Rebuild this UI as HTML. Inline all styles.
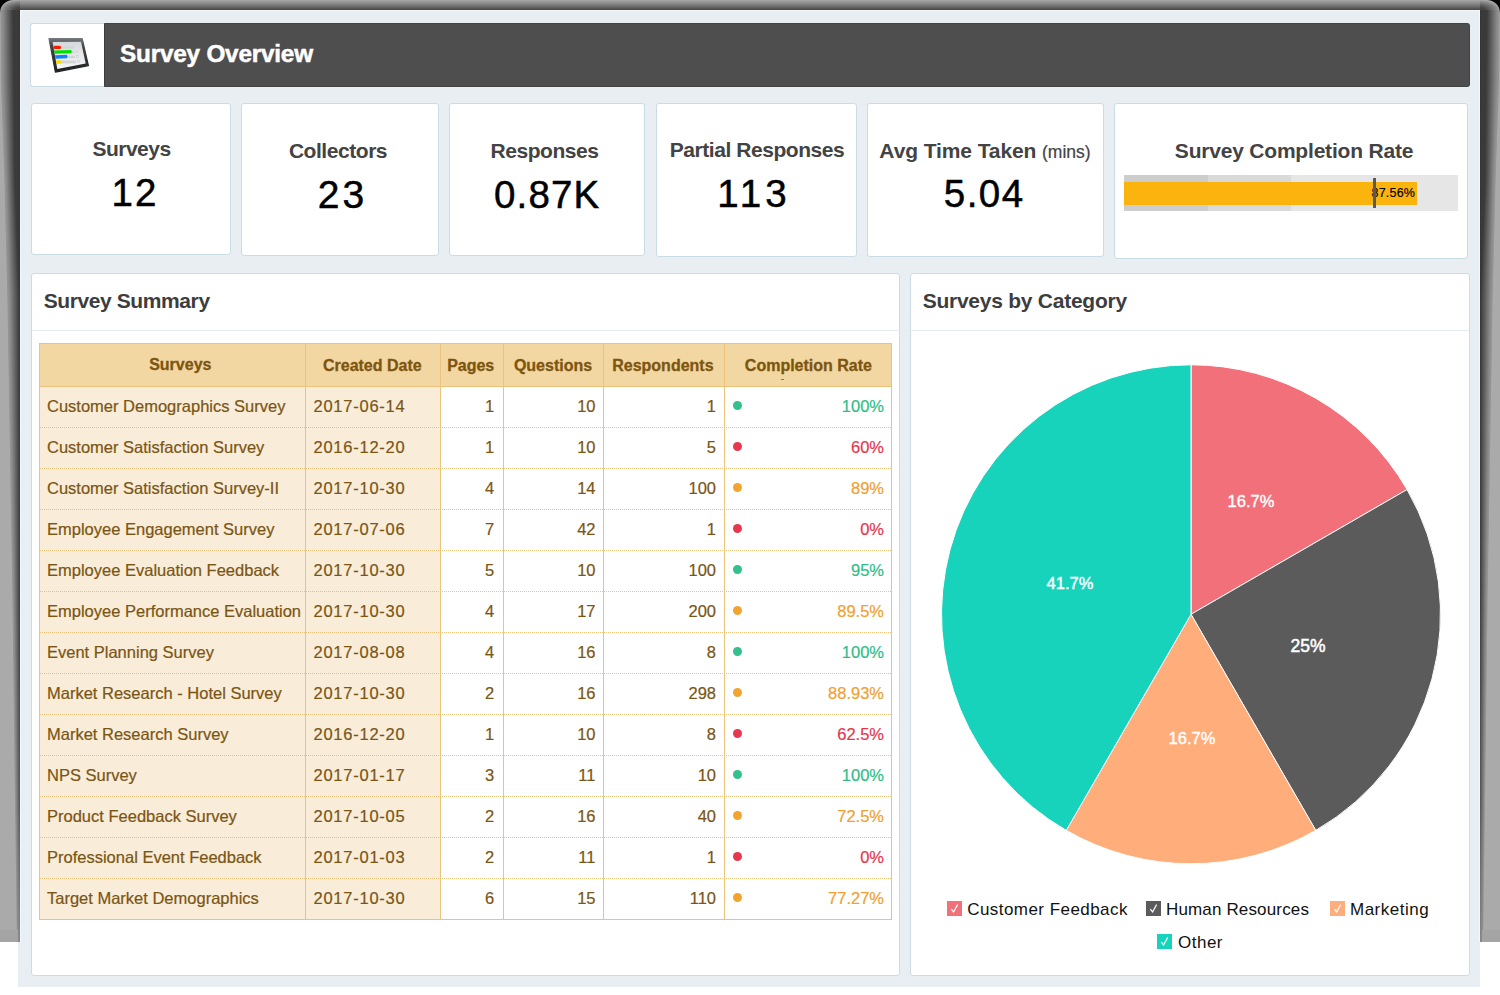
<!DOCTYPE html>
<html><head><meta charset="utf-8"><title>Survey Overview</title>
<style>
html,body{margin:0;padding:0;}
body{width:1500px;height:995px;position:relative;overflow:hidden;background:#fff;font-family:"Liberation Sans", sans-serif;}
.t{position:absolute;white-space:nowrap;}
</style></head><body>
<div style="position:absolute;left:18px;top:10px;width:1462px;height:977px;box-sizing:border-box;background:#e9eef2;"></div><div style="position:absolute;left:20px;top:10px;width:1460px;height:1px;box-sizing:border-box;background:#f4f8fb;"></div><div style="position:absolute;left:20px;top:10px;width:1px;height:932px;box-sizing:border-box;background:#f4f8fb;"></div><div style="position:absolute;left:1479px;top:10px;width:1px;height:932px;box-sizing:border-box;background:#f4f8fb;"></div><div style="position:absolute;left:0px;top:0px;width:1500px;height:10px;box-sizing:border-box;background:linear-gradient(to bottom,#ababab 0px,#959595 2px,#8f8f8f 3px,#5c5c5c 8px,#474747 10px);"></div><div style="position:absolute;left:0px;top:10px;width:20px;height:4px;box-sizing:border-box;background:linear-gradient(to right,#aaaaaa 0px,#aaaaaa 0.01px,#959595 0.81px,#8c8c8c 2.77px,#3a3a3a 13.03px,#3a3a3a 19.2px,#2e2e2e 20px);"></div><div style="position:absolute;left:1480px;top:10px;width:20px;height:4px;box-sizing:border-box;background:linear-gradient(to left,#aaaaaa 0px,#aaaaaa 0.01px,#959595 0.81px,#8c8c8c 2.77px,#3a3a3a 13.03px,#3a3a3a 19.2px,#2e2e2e 20px);"></div><div style="position:absolute;left:0px;top:14px;width:20px;height:4px;box-sizing:border-box;background:linear-gradient(to right,#aaaaaa 0px,#aaaaaa 0.04px,#959595 0.84px,#8c8c8c 2.80px,#3a3a3a 13.09px,#3a3a3a 19.2px,#2e2e2e 20px);"></div><div style="position:absolute;left:1480px;top:14px;width:20px;height:4px;box-sizing:border-box;background:linear-gradient(to left,#aaaaaa 0px,#aaaaaa 0.04px,#959595 0.84px,#8c8c8c 2.80px,#3a3a3a 13.09px,#3a3a3a 19.2px,#2e2e2e 20px);"></div><div style="position:absolute;left:0px;top:18px;width:20px;height:4px;box-sizing:border-box;background:linear-gradient(to right,#aaaaaa 0px,#aaaaaa 0.07px,#959595 0.87px,#8c8c8c 2.83px,#3a3a3a 13.14px,#3a3a3a 19.2px,#2e2e2e 20px);"></div><div style="position:absolute;left:1480px;top:18px;width:20px;height:4px;box-sizing:border-box;background:linear-gradient(to left,#aaaaaa 0px,#aaaaaa 0.07px,#959595 0.87px,#8c8c8c 2.83px,#3a3a3a 13.14px,#3a3a3a 19.2px,#2e2e2e 20px);"></div><div style="position:absolute;left:0px;top:22px;width:20px;height:4px;box-sizing:border-box;background:linear-gradient(to right,#aaaaaa 0px,#aaaaaa 0.10px,#959595 0.90px,#8c8c8c 2.87px,#3a3a3a 13.20px,#3a3a3a 19.2px,#2e2e2e 20px);"></div><div style="position:absolute;left:1480px;top:22px;width:20px;height:4px;box-sizing:border-box;background:linear-gradient(to left,#aaaaaa 0px,#aaaaaa 0.10px,#959595 0.90px,#8c8c8c 2.87px,#3a3a3a 13.20px,#3a3a3a 19.2px,#2e2e2e 20px);"></div><div style="position:absolute;left:0px;top:26px;width:20px;height:4px;box-sizing:border-box;background:linear-gradient(to right,#aaaaaa 0px,#aaaaaa 0.13px,#959595 0.93px,#8c8c8c 2.90px,#3a3a3a 13.26px,#3a3a3a 19.2px,#2e2e2e 20px);"></div><div style="position:absolute;left:1480px;top:26px;width:20px;height:4px;box-sizing:border-box;background:linear-gradient(to left,#aaaaaa 0px,#aaaaaa 0.13px,#959595 0.93px,#8c8c8c 2.90px,#3a3a3a 13.26px,#3a3a3a 19.2px,#2e2e2e 20px);"></div><div style="position:absolute;left:0px;top:30px;width:20px;height:4px;box-sizing:border-box;background:linear-gradient(to right,#aaaaaa 0px,#aaaaaa 0.16px,#959595 0.96px,#8c8c8c 2.93px,#3a3a3a 13.31px,#3a3a3a 19.2px,#2e2e2e 20px);"></div><div style="position:absolute;left:1480px;top:30px;width:20px;height:4px;box-sizing:border-box;background:linear-gradient(to left,#aaaaaa 0px,#aaaaaa 0.16px,#959595 0.96px,#8c8c8c 2.93px,#3a3a3a 13.31px,#3a3a3a 19.2px,#2e2e2e 20px);"></div><div style="position:absolute;left:0px;top:34px;width:20px;height:4px;box-sizing:border-box;background:linear-gradient(to right,#aaaaaa 0px,#aaaaaa 0.19px,#959595 0.99px,#8c8c8c 2.96px,#3a3a3a 13.37px,#3a3a3a 19.2px,#2e2e2e 20px);"></div><div style="position:absolute;left:1480px;top:34px;width:20px;height:4px;box-sizing:border-box;background:linear-gradient(to left,#aaaaaa 0px,#aaaaaa 0.19px,#959595 0.99px,#8c8c8c 2.96px,#3a3a3a 13.37px,#3a3a3a 19.2px,#2e2e2e 20px);"></div><div style="position:absolute;left:0px;top:38px;width:20px;height:4px;box-sizing:border-box;background:linear-gradient(to right,#aaaaaa 0px,#aaaaaa 0.21px,#959595 1.01px,#8c8c8c 3.00px,#3a3a3a 13.43px,#3a3a3a 19.2px,#2e2e2e 20px);"></div><div style="position:absolute;left:1480px;top:38px;width:20px;height:4px;box-sizing:border-box;background:linear-gradient(to left,#aaaaaa 0px,#aaaaaa 0.21px,#959595 1.01px,#8c8c8c 3.00px,#3a3a3a 13.43px,#3a3a3a 19.2px,#2e2e2e 20px);"></div><div style="position:absolute;left:0px;top:42px;width:20px;height:4px;box-sizing:border-box;background:linear-gradient(to right,#aaaaaa 0px,#aaaaaa 0.24px,#959595 1.04px,#8c8c8c 3.03px,#3a3a3a 13.49px,#3a3a3a 19.2px,#2e2e2e 20px);"></div><div style="position:absolute;left:1480px;top:42px;width:20px;height:4px;box-sizing:border-box;background:linear-gradient(to left,#aaaaaa 0px,#aaaaaa 0.24px,#959595 1.04px,#8c8c8c 3.03px,#3a3a3a 13.49px,#3a3a3a 19.2px,#2e2e2e 20px);"></div><div style="position:absolute;left:0px;top:46px;width:20px;height:4px;box-sizing:border-box;background:linear-gradient(to right,#aaaaaa 0px,#aaaaaa 0.27px,#959595 1.07px,#8c8c8c 3.06px,#3a3a3a 13.54px,#3a3a3a 19.2px,#2e2e2e 20px);"></div><div style="position:absolute;left:1480px;top:46px;width:20px;height:4px;box-sizing:border-box;background:linear-gradient(to left,#aaaaaa 0px,#aaaaaa 0.27px,#959595 1.07px,#8c8c8c 3.06px,#3a3a3a 13.54px,#3a3a3a 19.2px,#2e2e2e 20px);"></div><div style="position:absolute;left:0px;top:50px;width:20px;height:4px;box-sizing:border-box;background:linear-gradient(to right,#aaaaaa 0px,#aaaaaa 0.30px,#959595 1.10px,#8c8c8c 3.09px,#3a3a3a 13.60px,#3a3a3a 19.2px,#2e2e2e 20px);"></div><div style="position:absolute;left:1480px;top:50px;width:20px;height:4px;box-sizing:border-box;background:linear-gradient(to left,#aaaaaa 0px,#aaaaaa 0.30px,#959595 1.10px,#8c8c8c 3.09px,#3a3a3a 13.60px,#3a3a3a 19.2px,#2e2e2e 20px);"></div><div style="position:absolute;left:0px;top:54px;width:20px;height:4px;box-sizing:border-box;background:linear-gradient(to right,#aaaaaa 0px,#aaaaaa 0.33px,#959595 1.13px,#8c8c8c 3.13px,#3a3a3a 13.66px,#3a3a3a 19.2px,#2e2e2e 20px);"></div><div style="position:absolute;left:1480px;top:54px;width:20px;height:4px;box-sizing:border-box;background:linear-gradient(to left,#aaaaaa 0px,#aaaaaa 0.33px,#959595 1.13px,#8c8c8c 3.13px,#3a3a3a 13.66px,#3a3a3a 19.2px,#2e2e2e 20px);"></div><div style="position:absolute;left:0px;top:58px;width:20px;height:4px;box-sizing:border-box;background:linear-gradient(to right,#aaaaaa 0px,#aaaaaa 0.36px,#959595 1.16px,#8c8c8c 3.16px,#3a3a3a 13.71px,#3a3a3a 19.2px,#2e2e2e 20px);"></div><div style="position:absolute;left:1480px;top:58px;width:20px;height:4px;box-sizing:border-box;background:linear-gradient(to left,#aaaaaa 0px,#aaaaaa 0.36px,#959595 1.16px,#8c8c8c 3.16px,#3a3a3a 13.71px,#3a3a3a 19.2px,#2e2e2e 20px);"></div><div style="position:absolute;left:0px;top:62px;width:20px;height:4px;box-sizing:border-box;background:linear-gradient(to right,#aaaaaa 0px,#aaaaaa 0.39px,#959595 1.19px,#8c8c8c 3.19px,#3a3a3a 13.77px,#3a3a3a 19.2px,#2e2e2e 20px);"></div><div style="position:absolute;left:1480px;top:62px;width:20px;height:4px;box-sizing:border-box;background:linear-gradient(to left,#aaaaaa 0px,#aaaaaa 0.39px,#959595 1.19px,#8c8c8c 3.19px,#3a3a3a 13.77px,#3a3a3a 19.2px,#2e2e2e 20px);"></div><div style="position:absolute;left:0px;top:66px;width:20px;height:4px;box-sizing:border-box;background:linear-gradient(to right,#aaaaaa 0px,#aaaaaa 0.41px,#959595 1.21px,#8c8c8c 3.23px,#3a3a3a 13.83px,#3a3a3a 19.2px,#2e2e2e 20px);"></div><div style="position:absolute;left:1480px;top:66px;width:20px;height:4px;box-sizing:border-box;background:linear-gradient(to left,#aaaaaa 0px,#aaaaaa 0.41px,#959595 1.21px,#8c8c8c 3.23px,#3a3a3a 13.83px,#3a3a3a 19.2px,#2e2e2e 20px);"></div><div style="position:absolute;left:0px;top:70px;width:20px;height:4px;box-sizing:border-box;background:linear-gradient(to right,#aaaaaa 0px,#aaaaaa 0.44px,#959595 1.24px,#8c8c8c 3.26px,#3a3a3a 13.89px,#3a3a3a 19.2px,#2e2e2e 20px);"></div><div style="position:absolute;left:1480px;top:70px;width:20px;height:4px;box-sizing:border-box;background:linear-gradient(to left,#aaaaaa 0px,#aaaaaa 0.44px,#959595 1.24px,#8c8c8c 3.26px,#3a3a3a 13.89px,#3a3a3a 19.2px,#2e2e2e 20px);"></div><div style="position:absolute;left:0px;top:74px;width:20px;height:4px;box-sizing:border-box;background:linear-gradient(to right,#aaaaaa 0px,#aaaaaa 0.47px,#959595 1.27px,#8c8c8c 3.29px,#3a3a3a 13.94px,#3a3a3a 19.2px,#2e2e2e 20px);"></div><div style="position:absolute;left:1480px;top:74px;width:20px;height:4px;box-sizing:border-box;background:linear-gradient(to left,#aaaaaa 0px,#aaaaaa 0.47px,#959595 1.27px,#8c8c8c 3.29px,#3a3a3a 13.94px,#3a3a3a 19.2px,#2e2e2e 20px);"></div><div style="position:absolute;left:0px;top:78px;width:20px;height:4px;box-sizing:border-box;background:linear-gradient(to right,#aaaaaa 0px,#aaaaaa 0.50px,#959595 1.30px,#8c8c8c 3.33px,#3a3a3a 14.00px,#3a3a3a 19.2px,#2e2e2e 20px);"></div><div style="position:absolute;left:1480px;top:78px;width:20px;height:4px;box-sizing:border-box;background:linear-gradient(to left,#aaaaaa 0px,#aaaaaa 0.50px,#959595 1.30px,#8c8c8c 3.33px,#3a3a3a 14.00px,#3a3a3a 19.2px,#2e2e2e 20px);"></div><div style="position:absolute;left:0px;top:82px;width:20px;height:4px;box-sizing:border-box;background:linear-gradient(to right,#aaaaaa 0px,#aaaaaa 0.64px,#959595 1.44px,#8c8c8c 3.45px,#3a3a3a 14.04px,#3a3a3a 19.2px,#2e2e2e 20px);"></div><div style="position:absolute;left:1480px;top:82px;width:20px;height:4px;box-sizing:border-box;background:linear-gradient(to left,#aaaaaa 0px,#aaaaaa 0.64px,#959595 1.44px,#8c8c8c 3.45px,#3a3a3a 14.04px,#3a3a3a 19.2px,#2e2e2e 20px);"></div><div style="position:absolute;left:0px;top:86px;width:20px;height:4px;box-sizing:border-box;background:linear-gradient(to right,#aaaaaa 0px,#aaaaaa 0.78px,#959595 1.58px,#8c8c8c 3.58px,#3a3a3a 14.08px,#3a3a3a 19.2px,#2e2e2e 20px);"></div><div style="position:absolute;left:1480px;top:86px;width:20px;height:4px;box-sizing:border-box;background:linear-gradient(to left,#aaaaaa 0px,#aaaaaa 0.78px,#959595 1.58px,#8c8c8c 3.58px,#3a3a3a 14.08px,#3a3a3a 19.2px,#2e2e2e 20px);"></div><div style="position:absolute;left:0px;top:90px;width:20px;height:4px;box-sizing:border-box;background:linear-gradient(to right,#aaaaaa 0px,#aaaaaa 0.92px,#959595 1.72px,#8c8c8c 3.70px,#3a3a3a 14.12px,#3a3a3a 19.2px,#2e2e2e 20px);"></div><div style="position:absolute;left:1480px;top:90px;width:20px;height:4px;box-sizing:border-box;background:linear-gradient(to left,#aaaaaa 0px,#aaaaaa 0.92px,#959595 1.72px,#8c8c8c 3.70px,#3a3a3a 14.12px,#3a3a3a 19.2px,#2e2e2e 20px);"></div><div style="position:absolute;left:0px;top:94px;width:20px;height:4px;box-sizing:border-box;background:linear-gradient(to right,#aaaaaa 0px,#aaaaaa 1.06px,#959595 1.86px,#8c8c8c 3.83px,#3a3a3a 14.16px,#3a3a3a 19.2px,#2e2e2e 20px);"></div><div style="position:absolute;left:1480px;top:94px;width:20px;height:4px;box-sizing:border-box;background:linear-gradient(to left,#aaaaaa 0px,#aaaaaa 1.06px,#959595 1.86px,#8c8c8c 3.83px,#3a3a3a 14.16px,#3a3a3a 19.2px,#2e2e2e 20px);"></div><div style="position:absolute;left:0px;top:98px;width:20px;height:4px;box-sizing:border-box;background:linear-gradient(to right,#aaaaaa 0px,#aaaaaa 1.20px,#959595 2.00px,#8c8c8c 3.95px,#3a3a3a 14.20px,#3a3a3a 19.2px,#2e2e2e 20px);"></div><div style="position:absolute;left:1480px;top:98px;width:20px;height:4px;box-sizing:border-box;background:linear-gradient(to left,#aaaaaa 0px,#aaaaaa 1.20px,#959595 2.00px,#8c8c8c 3.95px,#3a3a3a 14.20px,#3a3a3a 19.2px,#2e2e2e 20px);"></div><div style="position:absolute;left:0px;top:102px;width:20px;height:4px;box-sizing:border-box;background:linear-gradient(to right,#aaaaaa 0px,#aaaaaa 1.34px,#959595 2.14px,#8c8c8c 4.08px,#3a3a3a 14.24px,#3a3a3a 19.2px,#2e2e2e 20px);"></div><div style="position:absolute;left:1480px;top:102px;width:20px;height:4px;box-sizing:border-box;background:linear-gradient(to left,#aaaaaa 0px,#aaaaaa 1.34px,#959595 2.14px,#8c8c8c 4.08px,#3a3a3a 14.24px,#3a3a3a 19.2px,#2e2e2e 20px);"></div><div style="position:absolute;left:0px;top:106px;width:20px;height:4px;box-sizing:border-box;background:linear-gradient(to right,#aaaaaa 0px,#aaaaaa 1.48px,#959595 2.28px,#8c8c8c 4.20px,#3a3a3a 14.28px,#3a3a3a 19.2px,#2e2e2e 20px);"></div><div style="position:absolute;left:1480px;top:106px;width:20px;height:4px;box-sizing:border-box;background:linear-gradient(to left,#aaaaaa 0px,#aaaaaa 1.48px,#959595 2.28px,#8c8c8c 4.20px,#3a3a3a 14.28px,#3a3a3a 19.2px,#2e2e2e 20px);"></div><div style="position:absolute;left:0px;top:110px;width:20px;height:4px;box-sizing:border-box;background:linear-gradient(to right,#aaaaaa 0px,#aaaaaa 1.62px,#959595 2.42px,#8c8c8c 4.33px,#3a3a3a 14.32px,#3a3a3a 19.2px,#2e2e2e 20px);"></div><div style="position:absolute;left:1480px;top:110px;width:20px;height:4px;box-sizing:border-box;background:linear-gradient(to left,#aaaaaa 0px,#aaaaaa 1.62px,#959595 2.42px,#8c8c8c 4.33px,#3a3a3a 14.32px,#3a3a3a 19.2px,#2e2e2e 20px);"></div><div style="position:absolute;left:0px;top:114px;width:20px;height:4px;box-sizing:border-box;background:linear-gradient(to right,#aaaaaa 0px,#aaaaaa 1.76px,#959595 2.56px,#8c8c8c 4.45px,#3a3a3a 14.36px,#3a3a3a 19.2px,#2e2e2e 20px);"></div><div style="position:absolute;left:1480px;top:114px;width:20px;height:4px;box-sizing:border-box;background:linear-gradient(to left,#aaaaaa 0px,#aaaaaa 1.76px,#959595 2.56px,#8c8c8c 4.45px,#3a3a3a 14.36px,#3a3a3a 19.2px,#2e2e2e 20px);"></div><div style="position:absolute;left:0px;top:118px;width:20px;height:4px;box-sizing:border-box;background:linear-gradient(to right,#aaaaaa 0px,#aaaaaa 1.90px,#959595 2.70px,#8c8c8c 4.58px,#3a3a3a 14.40px,#3a3a3a 19.2px,#2e2e2e 20px);"></div><div style="position:absolute;left:1480px;top:118px;width:20px;height:4px;box-sizing:border-box;background:linear-gradient(to left,#aaaaaa 0px,#aaaaaa 1.90px,#959595 2.70px,#8c8c8c 4.58px,#3a3a3a 14.40px,#3a3a3a 19.2px,#2e2e2e 20px);"></div><div style="position:absolute;left:0px;top:122px;width:20px;height:4px;box-sizing:border-box;background:linear-gradient(to right,#aaaaaa 0px,#aaaaaa 2.04px,#959595 2.84px,#8c8c8c 4.70px,#3a3a3a 14.44px,#3a3a3a 19.2px,#2e2e2e 20px);"></div><div style="position:absolute;left:1480px;top:122px;width:20px;height:4px;box-sizing:border-box;background:linear-gradient(to left,#aaaaaa 0px,#aaaaaa 2.04px,#959595 2.84px,#8c8c8c 4.70px,#3a3a3a 14.44px,#3a3a3a 19.2px,#2e2e2e 20px);"></div><div style="position:absolute;left:0px;top:126px;width:20px;height:4px;box-sizing:border-box;background:linear-gradient(to right,#aaaaaa 0px,#aaaaaa 2.18px,#959595 2.98px,#8c8c8c 4.82px,#3a3a3a 14.48px,#3a3a3a 19.2px,#2e2e2e 20px);"></div><div style="position:absolute;left:1480px;top:126px;width:20px;height:4px;box-sizing:border-box;background:linear-gradient(to left,#aaaaaa 0px,#aaaaaa 2.18px,#959595 2.98px,#8c8c8c 4.82px,#3a3a3a 14.48px,#3a3a3a 19.2px,#2e2e2e 20px);"></div><div style="position:absolute;left:0px;top:130px;width:20px;height:4px;box-sizing:border-box;background:linear-gradient(to right,#aaaaaa 0px,#aaaaaa 2.32px,#959595 3.12px,#8c8c8c 4.95px,#3a3a3a 14.52px,#3a3a3a 19.2px,#2e2e2e 20px);"></div><div style="position:absolute;left:1480px;top:130px;width:20px;height:4px;box-sizing:border-box;background:linear-gradient(to left,#aaaaaa 0px,#aaaaaa 2.32px,#959595 3.12px,#8c8c8c 4.95px,#3a3a3a 14.52px,#3a3a3a 19.2px,#2e2e2e 20px);"></div><div style="position:absolute;left:0px;top:134px;width:20px;height:4px;box-sizing:border-box;background:linear-gradient(to right,#aaaaaa 0px,#aaaaaa 2.46px,#959595 3.26px,#8c8c8c 5.08px,#3a3a3a 14.56px,#3a3a3a 19.2px,#2e2e2e 20px);"></div><div style="position:absolute;left:1480px;top:134px;width:20px;height:4px;box-sizing:border-box;background:linear-gradient(to left,#aaaaaa 0px,#aaaaaa 2.46px,#959595 3.26px,#8c8c8c 5.08px,#3a3a3a 14.56px,#3a3a3a 19.2px,#2e2e2e 20px);"></div><div style="position:absolute;left:0px;top:138px;width:20px;height:4px;box-sizing:border-box;background:linear-gradient(to right,#aaaaaa 0px,#aaaaaa 2.60px,#959595 3.40px,#8c8c8c 5.20px,#3a3a3a 14.60px,#3a3a3a 19.2px,#2e2e2e 20px);"></div><div style="position:absolute;left:1480px;top:138px;width:20px;height:4px;box-sizing:border-box;background:linear-gradient(to left,#aaaaaa 0px,#aaaaaa 2.60px,#959595 3.40px,#8c8c8c 5.20px,#3a3a3a 14.60px,#3a3a3a 19.2px,#2e2e2e 20px);"></div><div style="position:absolute;left:0px;top:142px;width:20px;height:4px;box-sizing:border-box;background:linear-gradient(to right,#aaaaaa 0px,#aaaaaa 2.74px,#959595 3.54px,#8c8c8c 5.33px,#3a3a3a 14.64px,#3a3a3a 19.2px,#2e2e2e 20px);"></div><div style="position:absolute;left:1480px;top:142px;width:20px;height:4px;box-sizing:border-box;background:linear-gradient(to left,#aaaaaa 0px,#aaaaaa 2.74px,#959595 3.54px,#8c8c8c 5.33px,#3a3a3a 14.64px,#3a3a3a 19.2px,#2e2e2e 20px);"></div><div style="position:absolute;left:0px;top:146px;width:20px;height:4px;box-sizing:border-box;background:linear-gradient(to right,#aaaaaa 0px,#aaaaaa 2.88px,#959595 3.68px,#8c8c8c 5.45px,#3a3a3a 14.68px,#3a3a3a 19.2px,#2e2e2e 20px);"></div><div style="position:absolute;left:1480px;top:146px;width:20px;height:4px;box-sizing:border-box;background:linear-gradient(to left,#aaaaaa 0px,#aaaaaa 2.88px,#959595 3.68px,#8c8c8c 5.45px,#3a3a3a 14.68px,#3a3a3a 19.2px,#2e2e2e 20px);"></div><div style="position:absolute;left:0px;top:150px;width:20px;height:4px;box-sizing:border-box;background:linear-gradient(to right,#aaaaaa 0px,#aaaaaa 3.02px,#959595 3.82px,#8c8c8c 5.58px,#3a3a3a 14.72px,#3a3a3a 19.2px,#2e2e2e 20px);"></div><div style="position:absolute;left:1480px;top:150px;width:20px;height:4px;box-sizing:border-box;background:linear-gradient(to left,#aaaaaa 0px,#aaaaaa 3.02px,#959595 3.82px,#8c8c8c 5.58px,#3a3a3a 14.72px,#3a3a3a 19.2px,#2e2e2e 20px);"></div><div style="position:absolute;left:0px;top:154px;width:20px;height:4px;box-sizing:border-box;background:linear-gradient(to right,#aaaaaa 0px,#aaaaaa 3.16px,#959595 3.96px,#8c8c8c 5.70px,#3a3a3a 14.76px,#3a3a3a 19.2px,#2e2e2e 20px);"></div><div style="position:absolute;left:1480px;top:154px;width:20px;height:4px;box-sizing:border-box;background:linear-gradient(to left,#aaaaaa 0px,#aaaaaa 3.16px,#959595 3.96px,#8c8c8c 5.70px,#3a3a3a 14.76px,#3a3a3a 19.2px,#2e2e2e 20px);"></div><div style="position:absolute;left:0px;top:158px;width:20px;height:4px;box-sizing:border-box;background:linear-gradient(to right,#aaaaaa 0px,#aaaaaa 3.30px,#959595 4.10px,#8c8c8c 5.82px,#3a3a3a 14.80px,#3a3a3a 19.2px,#2e2e2e 20px);"></div><div style="position:absolute;left:1480px;top:158px;width:20px;height:4px;box-sizing:border-box;background:linear-gradient(to left,#aaaaaa 0px,#aaaaaa 3.30px,#959595 4.10px,#8c8c8c 5.82px,#3a3a3a 14.80px,#3a3a3a 19.2px,#2e2e2e 20px);"></div><div style="position:absolute;left:0px;top:162px;width:20px;height:4px;box-sizing:border-box;background:linear-gradient(to right,#aaaaaa 0px,#aaaaaa 3.44px,#959595 4.24px,#8c8c8c 5.95px,#3a3a3a 14.84px,#3a3a3a 19.2px,#2e2e2e 20px);"></div><div style="position:absolute;left:1480px;top:162px;width:20px;height:4px;box-sizing:border-box;background:linear-gradient(to left,#aaaaaa 0px,#aaaaaa 3.44px,#959595 4.24px,#8c8c8c 5.95px,#3a3a3a 14.84px,#3a3a3a 19.2px,#2e2e2e 20px);"></div><div style="position:absolute;left:0px;top:166px;width:20px;height:4px;box-sizing:border-box;background:linear-gradient(to right,#aaaaaa 0px,#aaaaaa 3.58px,#959595 4.38px,#8c8c8c 6.08px,#3a3a3a 14.88px,#3a3a3a 19.2px,#2e2e2e 20px);"></div><div style="position:absolute;left:1480px;top:166px;width:20px;height:4px;box-sizing:border-box;background:linear-gradient(to left,#aaaaaa 0px,#aaaaaa 3.58px,#959595 4.38px,#8c8c8c 6.08px,#3a3a3a 14.88px,#3a3a3a 19.2px,#2e2e2e 20px);"></div><div style="position:absolute;left:0px;top:170px;width:20px;height:4px;box-sizing:border-box;background:linear-gradient(to right,#aaaaaa 0px,#aaaaaa 3.72px,#959595 4.52px,#8c8c8c 6.20px,#3a3a3a 14.92px,#3a3a3a 19.2px,#2e2e2e 20px);"></div><div style="position:absolute;left:1480px;top:170px;width:20px;height:4px;box-sizing:border-box;background:linear-gradient(to left,#aaaaaa 0px,#aaaaaa 3.72px,#959595 4.52px,#8c8c8c 6.20px,#3a3a3a 14.92px,#3a3a3a 19.2px,#2e2e2e 20px);"></div><div style="position:absolute;left:0px;top:174px;width:20px;height:4px;box-sizing:border-box;background:linear-gradient(to right,#aaaaaa 0px,#aaaaaa 3.86px,#959595 4.66px,#8c8c8c 6.33px,#3a3a3a 14.96px,#3a3a3a 19.2px,#2e2e2e 20px);"></div><div style="position:absolute;left:1480px;top:174px;width:20px;height:4px;box-sizing:border-box;background:linear-gradient(to left,#aaaaaa 0px,#aaaaaa 3.86px,#959595 4.66px,#8c8c8c 6.33px,#3a3a3a 14.96px,#3a3a3a 19.2px,#2e2e2e 20px);"></div><div style="position:absolute;left:0px;top:178px;width:20px;height:4px;box-sizing:border-box;background:linear-gradient(to right,#aaaaaa 0px,#aaaaaa 4.00px,#959595 4.80px,#8c8c8c 6.45px,#3a3a3a 15.00px,#3a3a3a 19.2px,#2e2e2e 20px);"></div><div style="position:absolute;left:1480px;top:178px;width:20px;height:4px;box-sizing:border-box;background:linear-gradient(to left,#aaaaaa 0px,#aaaaaa 4.00px,#959595 4.80px,#8c8c8c 6.45px,#3a3a3a 15.00px,#3a3a3a 19.2px,#2e2e2e 20px);"></div><div style="position:absolute;left:0px;top:182px;width:20px;height:4px;box-sizing:border-box;background:linear-gradient(to right,#aaaaaa 0px,#aaaaaa 4.10px,#959595 4.90px,#8c8c8c 6.56px,#3a3a3a 15.15px,#3a3a3a 19.2px,#2e2e2e 20px);"></div><div style="position:absolute;left:1480px;top:182px;width:20px;height:4px;box-sizing:border-box;background:linear-gradient(to left,#aaaaaa 0px,#aaaaaa 4.10px,#959595 4.90px,#8c8c8c 6.56px,#3a3a3a 15.15px,#3a3a3a 19.2px,#2e2e2e 20px);"></div><div style="position:absolute;left:0px;top:186px;width:20px;height:4px;box-sizing:border-box;background:linear-gradient(to right,#aaaaaa 0px,#aaaaaa 4.20px,#959595 5.00px,#8c8c8c 6.66px,#3a3a3a 15.29px,#3a3a3a 19.2px,#2e2e2e 20px);"></div><div style="position:absolute;left:1480px;top:186px;width:20px;height:4px;box-sizing:border-box;background:linear-gradient(to left,#aaaaaa 0px,#aaaaaa 4.20px,#959595 5.00px,#8c8c8c 6.66px,#3a3a3a 15.29px,#3a3a3a 19.2px,#2e2e2e 20px);"></div><div style="position:absolute;left:0px;top:190px;width:20px;height:4px;box-sizing:border-box;background:linear-gradient(to right,#aaaaaa 0px,#aaaaaa 4.30px,#959595 5.10px,#8c8c8c 6.77px,#3a3a3a 15.44px,#3a3a3a 19.2px,#2e2e2e 20px);"></div><div style="position:absolute;left:1480px;top:190px;width:20px;height:4px;box-sizing:border-box;background:linear-gradient(to left,#aaaaaa 0px,#aaaaaa 4.30px,#959595 5.10px,#8c8c8c 6.77px,#3a3a3a 15.44px,#3a3a3a 19.2px,#2e2e2e 20px);"></div><div style="position:absolute;left:0px;top:194px;width:20px;height:4px;box-sizing:border-box;background:linear-gradient(to right,#aaaaaa 0px,#aaaaaa 4.40px,#959595 5.20px,#8c8c8c 6.88px,#3a3a3a 15.59px,#3a3a3a 19.2px,#2e2e2e 20px);"></div><div style="position:absolute;left:1480px;top:194px;width:20px;height:4px;box-sizing:border-box;background:linear-gradient(to left,#aaaaaa 0px,#aaaaaa 4.40px,#959595 5.20px,#8c8c8c 6.88px,#3a3a3a 15.59px,#3a3a3a 19.2px,#2e2e2e 20px);"></div><div style="position:absolute;left:0px;top:198px;width:20px;height:4px;box-sizing:border-box;background:linear-gradient(to right,#aaaaaa 0px,#aaaaaa 4.50px,#959595 5.30px,#8c8c8c 6.98px,#3a3a3a 15.73px,#3a3a3a 19.2px,#2e2e2e 20px);"></div><div style="position:absolute;left:1480px;top:198px;width:20px;height:4px;box-sizing:border-box;background:linear-gradient(to left,#aaaaaa 0px,#aaaaaa 4.50px,#959595 5.30px,#8c8c8c 6.98px,#3a3a3a 15.73px,#3a3a3a 19.2px,#2e2e2e 20px);"></div><div style="position:absolute;left:0px;top:202px;width:20px;height:4px;box-sizing:border-box;background:linear-gradient(to right,#aaaaaa 0px,#aaaaaa 4.60px,#959595 5.40px,#8c8c8c 7.09px,#3a3a3a 15.88px,#3a3a3a 19.2px,#2e2e2e 20px);"></div><div style="position:absolute;left:1480px;top:202px;width:20px;height:4px;box-sizing:border-box;background:linear-gradient(to left,#aaaaaa 0px,#aaaaaa 4.60px,#959595 5.40px,#8c8c8c 7.09px,#3a3a3a 15.88px,#3a3a3a 19.2px,#2e2e2e 20px);"></div><div style="position:absolute;left:0px;top:206px;width:20px;height:4px;box-sizing:border-box;background:linear-gradient(to right,#aaaaaa 0px,#aaaaaa 4.70px,#959595 5.50px,#8c8c8c 7.20px,#3a3a3a 16.03px,#3a3a3a 19.2px,#2e2e2e 20px);"></div><div style="position:absolute;left:1480px;top:206px;width:20px;height:4px;box-sizing:border-box;background:linear-gradient(to left,#aaaaaa 0px,#aaaaaa 4.70px,#959595 5.50px,#8c8c8c 7.20px,#3a3a3a 16.03px,#3a3a3a 19.2px,#2e2e2e 20px);"></div><div style="position:absolute;left:0px;top:210px;width:20px;height:4px;box-sizing:border-box;background:linear-gradient(to right,#aaaaaa 0px,#aaaaaa 4.80px,#959595 5.60px,#8c8c8c 7.31px,#3a3a3a 16.17px,#3a3a3a 19.2px,#2e2e2e 20px);"></div><div style="position:absolute;left:1480px;top:210px;width:20px;height:4px;box-sizing:border-box;background:linear-gradient(to left,#aaaaaa 0px,#aaaaaa 4.80px,#959595 5.60px,#8c8c8c 7.31px,#3a3a3a 16.17px,#3a3a3a 19.2px,#2e2e2e 20px);"></div><div style="position:absolute;left:0px;top:214px;width:20px;height:4px;box-sizing:border-box;background:linear-gradient(to right,#aaaaaa 0px,#aaaaaa 4.90px,#959595 5.70px,#8c8c8c 7.41px,#3a3a3a 16.32px,#3a3a3a 19.2px,#2e2e2e 20px);"></div><div style="position:absolute;left:1480px;top:214px;width:20px;height:4px;box-sizing:border-box;background:linear-gradient(to left,#aaaaaa 0px,#aaaaaa 4.90px,#959595 5.70px,#8c8c8c 7.41px,#3a3a3a 16.32px,#3a3a3a 19.2px,#2e2e2e 20px);"></div><div style="position:absolute;left:0px;top:218px;width:20px;height:4px;box-sizing:border-box;background:linear-gradient(to right,#aaaaaa 0px,#aaaaaa 5.00px,#959595 5.80px,#8c8c8c 7.52px,#3a3a3a 16.47px,#3a3a3a 19.2px,#2e2e2e 20px);"></div><div style="position:absolute;left:1480px;top:218px;width:20px;height:4px;box-sizing:border-box;background:linear-gradient(to left,#aaaaaa 0px,#aaaaaa 5.00px,#959595 5.80px,#8c8c8c 7.52px,#3a3a3a 16.47px,#3a3a3a 19.2px,#2e2e2e 20px);"></div><div style="position:absolute;left:0px;top:222px;width:20px;height:4px;box-sizing:border-box;background:linear-gradient(to right,#aaaaaa 0px,#aaaaaa 5.10px,#959595 5.90px,#8c8c8c 7.63px,#3a3a3a 16.61px,#3a3a3a 19.2px,#2e2e2e 20px);"></div><div style="position:absolute;left:1480px;top:222px;width:20px;height:4px;box-sizing:border-box;background:linear-gradient(to left,#aaaaaa 0px,#aaaaaa 5.10px,#959595 5.90px,#8c8c8c 7.63px,#3a3a3a 16.61px,#3a3a3a 19.2px,#2e2e2e 20px);"></div><div style="position:absolute;left:0px;top:226px;width:20px;height:4px;box-sizing:border-box;background:linear-gradient(to right,#aaaaaa 0px,#aaaaaa 5.20px,#959595 6.00px,#8c8c8c 7.73px,#3a3a3a 16.76px,#3a3a3a 19.2px,#2e2e2e 20px);"></div><div style="position:absolute;left:1480px;top:226px;width:20px;height:4px;box-sizing:border-box;background:linear-gradient(to left,#aaaaaa 0px,#aaaaaa 5.20px,#959595 6.00px,#8c8c8c 7.73px,#3a3a3a 16.76px,#3a3a3a 19.2px,#2e2e2e 20px);"></div><div style="position:absolute;left:0px;top:230px;width:20px;height:4px;box-sizing:border-box;background:linear-gradient(to right,#aaaaaa 0px,#aaaaaa 5.30px,#959595 6.10px,#8c8c8c 7.84px,#3a3a3a 16.91px,#3a3a3a 19.2px,#2e2e2e 20px);"></div><div style="position:absolute;left:1480px;top:230px;width:20px;height:4px;box-sizing:border-box;background:linear-gradient(to left,#aaaaaa 0px,#aaaaaa 5.30px,#959595 6.10px,#8c8c8c 7.84px,#3a3a3a 16.91px,#3a3a3a 19.2px,#2e2e2e 20px);"></div><div style="position:absolute;left:0px;top:234px;width:20px;height:4px;box-sizing:border-box;background:linear-gradient(to right,#aaaaaa 0px,#aaaaaa 5.40px,#959595 6.20px,#8c8c8c 7.95px,#3a3a3a 17.05px,#3a3a3a 19.2px,#2e2e2e 20px);"></div><div style="position:absolute;left:1480px;top:234px;width:20px;height:4px;box-sizing:border-box;background:linear-gradient(to left,#aaaaaa 0px,#aaaaaa 5.40px,#959595 6.20px,#8c8c8c 7.95px,#3a3a3a 17.05px,#3a3a3a 19.2px,#2e2e2e 20px);"></div><div style="position:absolute;left:0px;top:238px;width:20px;height:4px;box-sizing:border-box;background:linear-gradient(to right,#aaaaaa 0px,#aaaaaa 5.50px,#959595 6.30px,#8c8c8c 8.05px,#3a3a3a 17.20px,#3a3a3a 19.2px,#2e2e2e 20px);"></div><div style="position:absolute;left:1480px;top:238px;width:20px;height:4px;box-sizing:border-box;background:linear-gradient(to left,#aaaaaa 0px,#aaaaaa 5.50px,#959595 6.30px,#8c8c8c 8.05px,#3a3a3a 17.20px,#3a3a3a 19.2px,#2e2e2e 20px);"></div><div style="position:absolute;left:0px;top:242px;width:20px;height:4px;box-sizing:border-box;background:linear-gradient(to right,#aaaaaa 0px,#aaaaaa 5.60px,#959595 6.40px,#8c8c8c 8.16px,#3a3a3a 17.35px,#3a3a3a 19.2px,#2e2e2e 20px);"></div><div style="position:absolute;left:1480px;top:242px;width:20px;height:4px;box-sizing:border-box;background:linear-gradient(to left,#aaaaaa 0px,#aaaaaa 5.60px,#959595 6.40px,#8c8c8c 8.16px,#3a3a3a 17.35px,#3a3a3a 19.2px,#2e2e2e 20px);"></div><div style="position:absolute;left:0px;top:246px;width:20px;height:4px;box-sizing:border-box;background:linear-gradient(to right,#aaaaaa 0px,#aaaaaa 5.70px,#959595 6.50px,#8c8c8c 8.27px,#3a3a3a 17.49px,#3a3a3a 19.2px,#2e2e2e 20px);"></div><div style="position:absolute;left:1480px;top:246px;width:20px;height:4px;box-sizing:border-box;background:linear-gradient(to left,#aaaaaa 0px,#aaaaaa 5.70px,#959595 6.50px,#8c8c8c 8.27px,#3a3a3a 17.49px,#3a3a3a 19.2px,#2e2e2e 20px);"></div><div style="position:absolute;left:0px;top:250px;width:20px;height:4px;box-sizing:border-box;background:linear-gradient(to right,#aaaaaa 0px,#aaaaaa 5.80px,#959595 6.60px,#8c8c8c 8.38px,#3a3a3a 17.64px,#3a3a3a 19.2px,#2e2e2e 20px);"></div><div style="position:absolute;left:1480px;top:250px;width:20px;height:4px;box-sizing:border-box;background:linear-gradient(to left,#aaaaaa 0px,#aaaaaa 5.80px,#959595 6.60px,#8c8c8c 8.38px,#3a3a3a 17.64px,#3a3a3a 19.2px,#2e2e2e 20px);"></div><div style="position:absolute;left:0px;top:254px;width:20px;height:4px;box-sizing:border-box;background:linear-gradient(to right,#aaaaaa 0px,#aaaaaa 5.90px,#959595 6.70px,#8c8c8c 8.48px,#3a3a3a 17.79px,#3a3a3a 19.2px,#2e2e2e 20px);"></div><div style="position:absolute;left:1480px;top:254px;width:20px;height:4px;box-sizing:border-box;background:linear-gradient(to left,#aaaaaa 0px,#aaaaaa 5.90px,#959595 6.70px,#8c8c8c 8.48px,#3a3a3a 17.79px,#3a3a3a 19.2px,#2e2e2e 20px);"></div><div style="position:absolute;left:0px;top:258px;width:20px;height:4px;box-sizing:border-box;background:linear-gradient(to right,#aaaaaa 0px,#aaaaaa 6.00px,#959595 6.80px,#8c8c8c 8.59px,#3a3a3a 17.93px,#3a3a3a 19.2px,#2e2e2e 20px);"></div><div style="position:absolute;left:1480px;top:258px;width:20px;height:4px;box-sizing:border-box;background:linear-gradient(to left,#aaaaaa 0px,#aaaaaa 6.00px,#959595 6.80px,#8c8c8c 8.59px,#3a3a3a 17.93px,#3a3a3a 19.2px,#2e2e2e 20px);"></div><div style="position:absolute;left:0px;top:262px;width:20px;height:4px;box-sizing:border-box;background:linear-gradient(to right,#aaaaaa 0px,#aaaaaa 6.10px,#959595 6.90px,#8c8c8c 8.70px,#3a3a3a 18.08px,#3a3a3a 19.2px,#2e2e2e 20px);"></div><div style="position:absolute;left:1480px;top:262px;width:20px;height:4px;box-sizing:border-box;background:linear-gradient(to left,#aaaaaa 0px,#aaaaaa 6.10px,#959595 6.90px,#8c8c8c 8.70px,#3a3a3a 18.08px,#3a3a3a 19.2px,#2e2e2e 20px);"></div><div style="position:absolute;left:0px;top:266px;width:20px;height:4px;box-sizing:border-box;background:linear-gradient(to right,#aaaaaa 0px,#aaaaaa 6.20px,#959595 7.00px,#8c8c8c 8.80px,#3a3a3a 18.23px,#3a3a3a 19.2px,#2e2e2e 20px);"></div><div style="position:absolute;left:1480px;top:266px;width:20px;height:4px;box-sizing:border-box;background:linear-gradient(to left,#aaaaaa 0px,#aaaaaa 6.20px,#959595 7.00px,#8c8c8c 8.80px,#3a3a3a 18.23px,#3a3a3a 19.2px,#2e2e2e 20px);"></div><div style="position:absolute;left:0px;top:270px;width:20px;height:4px;box-sizing:border-box;background:linear-gradient(to right,#aaaaaa 0px,#aaaaaa 6.30px,#959595 7.10px,#8c8c8c 8.91px,#3a3a3a 18.37px,#3a3a3a 19.2px,#2e2e2e 20px);"></div><div style="position:absolute;left:1480px;top:270px;width:20px;height:4px;box-sizing:border-box;background:linear-gradient(to left,#aaaaaa 0px,#aaaaaa 6.30px,#959595 7.10px,#8c8c8c 8.91px,#3a3a3a 18.37px,#3a3a3a 19.2px,#2e2e2e 20px);"></div><div style="position:absolute;left:0px;top:274px;width:20px;height:4px;box-sizing:border-box;background:linear-gradient(to right,#aaaaaa 0px,#aaaaaa 6.40px,#959595 7.20px,#8c8c8c 9.02px,#3a3a3a 18.52px,#3a3a3a 19.2px,#2e2e2e 20px);"></div><div style="position:absolute;left:1480px;top:274px;width:20px;height:4px;box-sizing:border-box;background:linear-gradient(to left,#aaaaaa 0px,#aaaaaa 6.40px,#959595 7.20px,#8c8c8c 9.02px,#3a3a3a 18.52px,#3a3a3a 19.2px,#2e2e2e 20px);"></div><div style="position:absolute;left:0px;top:278px;width:20px;height:4px;box-sizing:border-box;background:linear-gradient(to right,#aaaaaa 0px,#aaaaaa 6.50px,#959595 7.30px,#8c8c8c 9.12px,#3a3a3a 18.67px,#3a3a3a 19.2px,#2e2e2e 20px);"></div><div style="position:absolute;left:1480px;top:278px;width:20px;height:4px;box-sizing:border-box;background:linear-gradient(to left,#aaaaaa 0px,#aaaaaa 6.50px,#959595 7.30px,#8c8c8c 9.12px,#3a3a3a 18.67px,#3a3a3a 19.2px,#2e2e2e 20px);"></div><div style="position:absolute;left:0px;top:282px;width:20px;height:4px;box-sizing:border-box;background:linear-gradient(to right,#aaaaaa 0px,#aaaaaa 6.60px,#959595 7.40px,#8c8c8c 9.23px,#3a3a3a 18.81px,#3a3a3a 19.2px,#2e2e2e 20px);"></div><div style="position:absolute;left:1480px;top:282px;width:20px;height:4px;box-sizing:border-box;background:linear-gradient(to left,#aaaaaa 0px,#aaaaaa 6.60px,#959595 7.40px,#8c8c8c 9.23px,#3a3a3a 18.81px,#3a3a3a 19.2px,#2e2e2e 20px);"></div><div style="position:absolute;left:0px;top:286px;width:20px;height:4px;box-sizing:border-box;background:linear-gradient(to right,#aaaaaa 0px,#aaaaaa 6.70px,#959595 7.50px,#8c8c8c 9.34px,#3a3a3a 18.96px,#3a3a3a 19.2px,#2e2e2e 20px);"></div><div style="position:absolute;left:1480px;top:286px;width:20px;height:4px;box-sizing:border-box;background:linear-gradient(to left,#aaaaaa 0px,#aaaaaa 6.70px,#959595 7.50px,#8c8c8c 9.34px,#3a3a3a 18.96px,#3a3a3a 19.2px,#2e2e2e 20px);"></div><div style="position:absolute;left:0px;top:290px;width:20px;height:4px;box-sizing:border-box;background:linear-gradient(to right,#aaaaaa 0px,#aaaaaa 6.80px,#959595 7.60px,#8c8c8c 9.45px,#3a3a3a 19.11px,#3a3a3a 19.2px,#2e2e2e 20px);"></div><div style="position:absolute;left:1480px;top:290px;width:20px;height:4px;box-sizing:border-box;background:linear-gradient(to left,#aaaaaa 0px,#aaaaaa 6.80px,#959595 7.60px,#8c8c8c 9.45px,#3a3a3a 19.11px,#3a3a3a 19.2px,#2e2e2e 20px);"></div><div style="position:absolute;left:0px;top:294px;width:20px;height:4px;box-sizing:border-box;background:linear-gradient(to right,#aaaaaa 0px,#aaaaaa 6.90px,#959595 7.70px,#8c8c8c 9.55px,#3a3a3a 19.25px,#3a3a3a 19.2px,#2e2e2e 20px);"></div><div style="position:absolute;left:1480px;top:294px;width:20px;height:4px;box-sizing:border-box;background:linear-gradient(to left,#aaaaaa 0px,#aaaaaa 6.90px,#959595 7.70px,#8c8c8c 9.55px,#3a3a3a 19.25px,#3a3a3a 19.2px,#2e2e2e 20px);"></div><div style="position:absolute;left:0px;top:298px;width:20px;height:4px;box-sizing:border-box;background:linear-gradient(to right,#aaaaaa 0px,#aaaaaa 7.00px,#959595 7.80px,#8c8c8c 9.66px,#3a3a3a 19.40px,#3a3a3a 19.2px,#2e2e2e 20px);"></div><div style="position:absolute;left:1480px;top:298px;width:20px;height:4px;box-sizing:border-box;background:linear-gradient(to left,#aaaaaa 0px,#aaaaaa 7.00px,#959595 7.80px,#8c8c8c 9.66px,#3a3a3a 19.40px,#3a3a3a 19.2px,#2e2e2e 20px);"></div><div style="position:absolute;left:0px;top:302px;width:20px;height:4px;box-sizing:border-box;background:linear-gradient(to right,#aaaaaa 0px,#aaaaaa 7.07px,#959595 7.87px,#8c8c8c 9.72px,#3a3a3a 19.40px,#3a3a3a 19.2px,#2e2e2e 20px);"></div><div style="position:absolute;left:1480px;top:302px;width:20px;height:4px;box-sizing:border-box;background:linear-gradient(to left,#aaaaaa 0px,#aaaaaa 7.07px,#959595 7.87px,#8c8c8c 9.72px,#3a3a3a 19.40px,#3a3a3a 19.2px,#2e2e2e 20px);"></div><div style="position:absolute;left:0px;top:306px;width:20px;height:4px;box-sizing:border-box;background:linear-gradient(to right,#aaaaaa 0px,#aaaaaa 7.13px,#959595 7.93px,#8c8c8c 9.77px,#3a3a3a 19.40px,#3a3a3a 19.2px,#2e2e2e 20px);"></div><div style="position:absolute;left:1480px;top:306px;width:20px;height:4px;box-sizing:border-box;background:linear-gradient(to left,#aaaaaa 0px,#aaaaaa 7.13px,#959595 7.93px,#8c8c8c 9.77px,#3a3a3a 19.40px,#3a3a3a 19.2px,#2e2e2e 20px);"></div><div style="position:absolute;left:0px;top:310px;width:20px;height:4px;box-sizing:border-box;background:linear-gradient(to right,#aaaaaa 0px,#aaaaaa 7.20px,#959595 8.00px,#8c8c8c 9.83px,#3a3a3a 19.40px,#3a3a3a 19.2px,#2e2e2e 20px);"></div><div style="position:absolute;left:1480px;top:310px;width:20px;height:4px;box-sizing:border-box;background:linear-gradient(to left,#aaaaaa 0px,#aaaaaa 7.20px,#959595 8.00px,#8c8c8c 9.83px,#3a3a3a 19.40px,#3a3a3a 19.2px,#2e2e2e 20px);"></div><div style="position:absolute;left:0px;top:314px;width:20px;height:4px;box-sizing:border-box;background:linear-gradient(to right,#aaaaaa 0px,#aaaaaa 7.27px,#959595 8.07px,#8c8c8c 9.89px,#3a3a3a 19.40px,#3a3a3a 19.2px,#2e2e2e 20px);"></div><div style="position:absolute;left:1480px;top:314px;width:20px;height:4px;box-sizing:border-box;background:linear-gradient(to left,#aaaaaa 0px,#aaaaaa 7.27px,#959595 8.07px,#8c8c8c 9.89px,#3a3a3a 19.40px,#3a3a3a 19.2px,#2e2e2e 20px);"></div><div style="position:absolute;left:0px;top:318px;width:20px;height:4px;box-sizing:border-box;background:linear-gradient(to right,#aaaaaa 0px,#aaaaaa 7.33px,#959595 8.13px,#8c8c8c 9.94px,#3a3a3a 19.40px,#3a3a3a 19.2px,#2e2e2e 20px);"></div><div style="position:absolute;left:1480px;top:318px;width:20px;height:4px;box-sizing:border-box;background:linear-gradient(to left,#aaaaaa 0px,#aaaaaa 7.33px,#959595 8.13px,#8c8c8c 9.94px,#3a3a3a 19.40px,#3a3a3a 19.2px,#2e2e2e 20px);"></div><div style="position:absolute;left:0px;top:322px;width:20px;height:4px;box-sizing:border-box;background:linear-gradient(to right,#aaaaaa 0px,#aaaaaa 7.40px,#959595 8.20px,#8c8c8c 10.00px,#3a3a3a 19.40px,#3a3a3a 19.2px,#2e2e2e 20px);"></div><div style="position:absolute;left:1480px;top:322px;width:20px;height:4px;box-sizing:border-box;background:linear-gradient(to left,#aaaaaa 0px,#aaaaaa 7.40px,#959595 8.20px,#8c8c8c 10.00px,#3a3a3a 19.40px,#3a3a3a 19.2px,#2e2e2e 20px);"></div><div style="position:absolute;left:0px;top:326px;width:20px;height:4px;box-sizing:border-box;background:linear-gradient(to right,#aaaaaa 0px,#aaaaaa 7.47px,#959595 8.27px,#8c8c8c 10.06px,#3a3a3a 19.40px,#3a3a3a 19.2px,#2e2e2e 20px);"></div><div style="position:absolute;left:1480px;top:326px;width:20px;height:4px;box-sizing:border-box;background:linear-gradient(to left,#aaaaaa 0px,#aaaaaa 7.47px,#959595 8.27px,#8c8c8c 10.06px,#3a3a3a 19.40px,#3a3a3a 19.2px,#2e2e2e 20px);"></div><div style="position:absolute;left:0px;top:330px;width:20px;height:4px;box-sizing:border-box;background:linear-gradient(to right,#aaaaaa 0px,#aaaaaa 7.53px,#959595 8.33px,#8c8c8c 10.11px,#3b3b3b 19.40px,#3b3b3b 19.2px,#2f2f2f 20px);"></div><div style="position:absolute;left:1480px;top:330px;width:20px;height:4px;box-sizing:border-box;background:linear-gradient(to left,#aaaaaa 0px,#aaaaaa 7.53px,#959595 8.33px,#8c8c8c 10.11px,#3b3b3b 19.40px,#3b3b3b 19.2px,#2f2f2f 20px);"></div><div style="position:absolute;left:0px;top:334px;width:20px;height:4px;box-sizing:border-box;background:linear-gradient(to right,#aaaaaa 0px,#aaaaaa 7.60px,#959595 8.40px,#8c8c8c 10.17px,#3b3b3b 19.40px,#3b3b3b 19.2px,#2f2f2f 20px);"></div><div style="position:absolute;left:1480px;top:334px;width:20px;height:4px;box-sizing:border-box;background:linear-gradient(to left,#aaaaaa 0px,#aaaaaa 7.60px,#959595 8.40px,#8c8c8c 10.17px,#3b3b3b 19.40px,#3b3b3b 19.2px,#2f2f2f 20px);"></div><div style="position:absolute;left:0px;top:338px;width:20px;height:4px;box-sizing:border-box;background:linear-gradient(to right,#aaaaaa 0px,#aaaaaa 7.67px,#959595 8.47px,#8c8c8c 10.23px,#3b3b3b 19.40px,#3b3b3b 19.2px,#2f2f2f 20px);"></div><div style="position:absolute;left:1480px;top:338px;width:20px;height:4px;box-sizing:border-box;background:linear-gradient(to left,#aaaaaa 0px,#aaaaaa 7.67px,#959595 8.47px,#8c8c8c 10.23px,#3b3b3b 19.40px,#3b3b3b 19.2px,#2f2f2f 20px);"></div><div style="position:absolute;left:0px;top:342px;width:20px;height:4px;box-sizing:border-box;background:linear-gradient(to right,#aaaaaa 0px,#aaaaaa 7.73px,#959595 8.53px,#8c8c8c 10.28px,#3b3b3b 19.40px,#3b3b3b 19.2px,#2f2f2f 20px);"></div><div style="position:absolute;left:1480px;top:342px;width:20px;height:4px;box-sizing:border-box;background:linear-gradient(to left,#aaaaaa 0px,#aaaaaa 7.73px,#959595 8.53px,#8c8c8c 10.28px,#3b3b3b 19.40px,#3b3b3b 19.2px,#2f2f2f 20px);"></div><div style="position:absolute;left:0px;top:346px;width:20px;height:4px;box-sizing:border-box;background:linear-gradient(to right,#aaaaaa 0px,#aaaaaa 7.80px,#959595 8.60px,#8c8c8c 10.34px,#3b3b3b 19.40px,#3b3b3b 19.2px,#2f2f2f 20px);"></div><div style="position:absolute;left:1480px;top:346px;width:20px;height:4px;box-sizing:border-box;background:linear-gradient(to left,#aaaaaa 0px,#aaaaaa 7.80px,#959595 8.60px,#8c8c8c 10.34px,#3b3b3b 19.40px,#3b3b3b 19.2px,#2f2f2f 20px);"></div><div style="position:absolute;left:0px;top:350px;width:20px;height:4px;box-sizing:border-box;background:linear-gradient(to right,#aaaaaa 0px,#aaaaaa 7.87px,#959595 8.67px,#8c8c8c 10.40px,#3b3b3b 19.40px,#3b3b3b 19.2px,#2f2f2f 20px);"></div><div style="position:absolute;left:1480px;top:350px;width:20px;height:4px;box-sizing:border-box;background:linear-gradient(to left,#aaaaaa 0px,#aaaaaa 7.87px,#959595 8.67px,#8c8c8c 10.40px,#3b3b3b 19.40px,#3b3b3b 19.2px,#2f2f2f 20px);"></div><div style="position:absolute;left:0px;top:354px;width:20px;height:4px;box-sizing:border-box;background:linear-gradient(to right,#aaaaaa 0px,#aaaaaa 7.93px,#959595 8.73px,#8c8c8c 10.45px,#3b3b3b 19.40px,#3b3b3b 19.2px,#2f2f2f 20px);"></div><div style="position:absolute;left:1480px;top:354px;width:20px;height:4px;box-sizing:border-box;background:linear-gradient(to left,#aaaaaa 0px,#aaaaaa 7.93px,#959595 8.73px,#8c8c8c 10.45px,#3b3b3b 19.40px,#3b3b3b 19.2px,#2f2f2f 20px);"></div><div style="position:absolute;left:0px;top:358px;width:20px;height:4px;box-sizing:border-box;background:linear-gradient(to right,#aaaaaa 0px,#aaaaaa 8.00px,#959595 8.80px,#8c8c8c 10.51px,#3c3c3c 19.40px,#3c3c3c 19.2px,#303030 20px);"></div><div style="position:absolute;left:1480px;top:358px;width:20px;height:4px;box-sizing:border-box;background:linear-gradient(to left,#aaaaaa 0px,#aaaaaa 8.00px,#959595 8.80px,#8c8c8c 10.51px,#3c3c3c 19.40px,#3c3c3c 19.2px,#303030 20px);"></div><div style="position:absolute;left:0px;top:362px;width:20px;height:4px;box-sizing:border-box;background:linear-gradient(to right,#aaaaaa 0px,#aaaaaa 8.07px,#959595 8.87px,#8c8c8c 10.57px,#3c3c3c 19.40px,#3c3c3c 19.2px,#303030 20px);"></div><div style="position:absolute;left:1480px;top:362px;width:20px;height:4px;box-sizing:border-box;background:linear-gradient(to left,#aaaaaa 0px,#aaaaaa 8.07px,#959595 8.87px,#8c8c8c 10.57px,#3c3c3c 19.40px,#3c3c3c 19.2px,#303030 20px);"></div><div style="position:absolute;left:0px;top:366px;width:20px;height:4px;box-sizing:border-box;background:linear-gradient(to right,#aaaaaa 0px,#aaaaaa 8.13px,#959595 8.93px,#8c8c8c 10.62px,#3c3c3c 19.40px,#3c3c3c 19.2px,#303030 20px);"></div><div style="position:absolute;left:1480px;top:366px;width:20px;height:4px;box-sizing:border-box;background:linear-gradient(to left,#aaaaaa 0px,#aaaaaa 8.13px,#959595 8.93px,#8c8c8c 10.62px,#3c3c3c 19.40px,#3c3c3c 19.2px,#303030 20px);"></div><div style="position:absolute;left:0px;top:370px;width:20px;height:4px;box-sizing:border-box;background:linear-gradient(to right,#aaaaaa 0px,#aaaaaa 8.20px,#959595 9.00px,#8c8c8c 10.68px,#3c3c3c 19.40px,#3c3c3c 19.2px,#303030 20px);"></div><div style="position:absolute;left:1480px;top:370px;width:20px;height:4px;box-sizing:border-box;background:linear-gradient(to left,#aaaaaa 0px,#aaaaaa 8.20px,#959595 9.00px,#8c8c8c 10.68px,#3c3c3c 19.40px,#3c3c3c 19.2px,#303030 20px);"></div><div style="position:absolute;left:0px;top:374px;width:20px;height:4px;box-sizing:border-box;background:linear-gradient(to right,#aaaaaa 0px,#aaaaaa 8.27px,#959595 9.07px,#8c8c8c 10.74px,#3c3c3c 19.40px,#3c3c3c 19.2px,#303030 20px);"></div><div style="position:absolute;left:1480px;top:374px;width:20px;height:4px;box-sizing:border-box;background:linear-gradient(to left,#aaaaaa 0px,#aaaaaa 8.27px,#959595 9.07px,#8c8c8c 10.74px,#3c3c3c 19.40px,#3c3c3c 19.2px,#303030 20px);"></div><div style="position:absolute;left:0px;top:378px;width:20px;height:4px;box-sizing:border-box;background:linear-gradient(to right,#aaaaaa 0px,#aaaaaa 8.33px,#959595 9.13px,#8c8c8c 10.79px,#3c3c3c 19.40px,#3c3c3c 19.2px,#303030 20px);"></div><div style="position:absolute;left:1480px;top:378px;width:20px;height:4px;box-sizing:border-box;background:linear-gradient(to left,#aaaaaa 0px,#aaaaaa 8.33px,#959595 9.13px,#8c8c8c 10.79px,#3c3c3c 19.40px,#3c3c3c 19.2px,#303030 20px);"></div><div style="position:absolute;left:0px;top:382px;width:20px;height:4px;box-sizing:border-box;background:linear-gradient(to right,#aaaaaa 0px,#aaaaaa 8.40px,#959595 9.20px,#8c8c8c 10.85px,#3c3c3c 19.40px,#3c3c3c 19.2px,#303030 20px);"></div><div style="position:absolute;left:1480px;top:382px;width:20px;height:4px;box-sizing:border-box;background:linear-gradient(to left,#aaaaaa 0px,#aaaaaa 8.40px,#959595 9.20px,#8c8c8c 10.85px,#3c3c3c 19.40px,#3c3c3c 19.2px,#303030 20px);"></div><div style="position:absolute;left:0px;top:386px;width:20px;height:4px;box-sizing:border-box;background:linear-gradient(to right,#aaaaaa 0px,#aaaaaa 8.47px,#959595 9.27px,#8c8c8c 10.91px,#3c3c3c 19.40px,#3c3c3c 19.2px,#303030 20px);"></div><div style="position:absolute;left:1480px;top:386px;width:20px;height:4px;box-sizing:border-box;background:linear-gradient(to left,#aaaaaa 0px,#aaaaaa 8.47px,#959595 9.27px,#8c8c8c 10.91px,#3c3c3c 19.40px,#3c3c3c 19.2px,#303030 20px);"></div><div style="position:absolute;left:0px;top:390px;width:20px;height:4px;box-sizing:border-box;background:linear-gradient(to right,#aaaaaa 0px,#aaaaaa 8.53px,#959595 9.33px,#8c8c8c 10.96px,#3d3d3d 19.40px,#3d3d3d 19.2px,#313131 20px);"></div><div style="position:absolute;left:1480px;top:390px;width:20px;height:4px;box-sizing:border-box;background:linear-gradient(to left,#aaaaaa 0px,#aaaaaa 8.53px,#959595 9.33px,#8c8c8c 10.96px,#3d3d3d 19.40px,#3d3d3d 19.2px,#313131 20px);"></div><div style="position:absolute;left:0px;top:394px;width:20px;height:4px;box-sizing:border-box;background:linear-gradient(to right,#aaaaaa 0px,#aaaaaa 8.60px,#959595 9.40px,#8c8c8c 11.02px,#3d3d3d 19.40px,#3d3d3d 19.2px,#313131 20px);"></div><div style="position:absolute;left:1480px;top:394px;width:20px;height:4px;box-sizing:border-box;background:linear-gradient(to left,#aaaaaa 0px,#aaaaaa 8.60px,#959595 9.40px,#8c8c8c 11.02px,#3d3d3d 19.40px,#3d3d3d 19.2px,#313131 20px);"></div><div style="position:absolute;left:0px;top:398px;width:20px;height:4px;box-sizing:border-box;background:linear-gradient(to right,#aaaaaa 0px,#aaaaaa 8.67px,#959595 9.47px,#8c8c8c 11.08px,#3d3d3d 19.40px,#3d3d3d 19.2px,#313131 20px);"></div><div style="position:absolute;left:1480px;top:398px;width:20px;height:4px;box-sizing:border-box;background:linear-gradient(to left,#aaaaaa 0px,#aaaaaa 8.67px,#959595 9.47px,#8c8c8c 11.08px,#3d3d3d 19.40px,#3d3d3d 19.2px,#313131 20px);"></div><div style="position:absolute;left:0px;top:402px;width:20px;height:4px;box-sizing:border-box;background:linear-gradient(to right,#aaaaaa 0px,#aaaaaa 8.73px,#959595 9.53px,#8c8c8c 11.13px,#3d3d3d 19.40px,#3d3d3d 19.2px,#313131 20px);"></div><div style="position:absolute;left:1480px;top:402px;width:20px;height:4px;box-sizing:border-box;background:linear-gradient(to left,#aaaaaa 0px,#aaaaaa 8.73px,#959595 9.53px,#8c8c8c 11.13px,#3d3d3d 19.40px,#3d3d3d 19.2px,#313131 20px);"></div><div style="position:absolute;left:0px;top:406px;width:20px;height:4px;box-sizing:border-box;background:linear-gradient(to right,#aaaaaa 0px,#aaaaaa 8.80px,#959595 9.60px,#8c8c8c 11.19px,#3d3d3d 19.40px,#3d3d3d 19.2px,#313131 20px);"></div><div style="position:absolute;left:1480px;top:406px;width:20px;height:4px;box-sizing:border-box;background:linear-gradient(to left,#aaaaaa 0px,#aaaaaa 8.80px,#959595 9.60px,#8c8c8c 11.19px,#3d3d3d 19.40px,#3d3d3d 19.2px,#313131 20px);"></div><div style="position:absolute;left:0px;top:410px;width:20px;height:4px;box-sizing:border-box;background:linear-gradient(to right,#aaaaaa 0px,#aaaaaa 8.87px,#959595 9.67px,#8c8c8c 11.25px,#3d3d3d 19.40px,#3d3d3d 19.2px,#313131 20px);"></div><div style="position:absolute;left:1480px;top:410px;width:20px;height:4px;box-sizing:border-box;background:linear-gradient(to left,#aaaaaa 0px,#aaaaaa 8.87px,#959595 9.67px,#8c8c8c 11.25px,#3d3d3d 19.40px,#3d3d3d 19.2px,#313131 20px);"></div><div style="position:absolute;left:0px;top:414px;width:20px;height:4px;box-sizing:border-box;background:linear-gradient(to right,#aaaaaa 0px,#aaaaaa 8.93px,#959595 9.73px,#8c8c8c 11.30px,#3d3d3d 19.40px,#3d3d3d 19.2px,#313131 20px);"></div><div style="position:absolute;left:1480px;top:414px;width:20px;height:4px;box-sizing:border-box;background:linear-gradient(to left,#aaaaaa 0px,#aaaaaa 8.93px,#959595 9.73px,#8c8c8c 11.30px,#3d3d3d 19.40px,#3d3d3d 19.2px,#313131 20px);"></div><div style="position:absolute;left:0px;top:418px;width:20px;height:4px;box-sizing:border-box;background:linear-gradient(to right,#aaaaaa 0px,#aaaaaa 9.00px,#959595 9.80px,#8c8c8c 11.36px,#3e3e3e 19.40px,#3e3e3e 19.2px,#323232 20px);"></div><div style="position:absolute;left:1480px;top:418px;width:20px;height:4px;box-sizing:border-box;background:linear-gradient(to left,#aaaaaa 0px,#aaaaaa 9.00px,#959595 9.80px,#8c8c8c 11.36px,#3e3e3e 19.40px,#3e3e3e 19.2px,#323232 20px);"></div><div style="position:absolute;left:0px;top:422px;width:20px;height:4px;box-sizing:border-box;background:linear-gradient(to right,#aaaaaa 0px,#aaaaaa 9.07px,#959595 9.87px,#8c8c8c 11.42px,#3e3e3e 19.40px,#3e3e3e 19.2px,#323232 20px);"></div><div style="position:absolute;left:1480px;top:422px;width:20px;height:4px;box-sizing:border-box;background:linear-gradient(to left,#aaaaaa 0px,#aaaaaa 9.07px,#959595 9.87px,#8c8c8c 11.42px,#3e3e3e 19.40px,#3e3e3e 19.2px,#323232 20px);"></div><div style="position:absolute;left:0px;top:426px;width:20px;height:4px;box-sizing:border-box;background:linear-gradient(to right,#aaaaaa 0px,#aaaaaa 9.13px,#959595 9.93px,#8c8c8c 11.47px,#3e3e3e 19.40px,#3e3e3e 19.2px,#323232 20px);"></div><div style="position:absolute;left:1480px;top:426px;width:20px;height:4px;box-sizing:border-box;background:linear-gradient(to left,#aaaaaa 0px,#aaaaaa 9.13px,#959595 9.93px,#8c8c8c 11.47px,#3e3e3e 19.40px,#3e3e3e 19.2px,#323232 20px);"></div><div style="position:absolute;left:0px;top:430px;width:20px;height:4px;box-sizing:border-box;background:linear-gradient(to right,#aaaaaa 0px,#aaaaaa 9.20px,#959595 10.00px,#8c8c8c 11.53px,#3e3e3e 19.40px,#3e3e3e 19.2px,#323232 20px);"></div><div style="position:absolute;left:1480px;top:430px;width:20px;height:4px;box-sizing:border-box;background:linear-gradient(to left,#aaaaaa 0px,#aaaaaa 9.20px,#959595 10.00px,#8c8c8c 11.53px,#3e3e3e 19.40px,#3e3e3e 19.2px,#323232 20px);"></div><div style="position:absolute;left:0px;top:434px;width:20px;height:4px;box-sizing:border-box;background:linear-gradient(to right,#aaaaaa 0px,#aaaaaa 9.27px,#959595 10.07px,#8c8c8c 11.59px,#3e3e3e 19.40px,#3e3e3e 19.2px,#323232 20px);"></div><div style="position:absolute;left:1480px;top:434px;width:20px;height:4px;box-sizing:border-box;background:linear-gradient(to left,#aaaaaa 0px,#aaaaaa 9.27px,#959595 10.07px,#8c8c8c 11.59px,#3e3e3e 19.40px,#3e3e3e 19.2px,#323232 20px);"></div><div style="position:absolute;left:0px;top:438px;width:20px;height:4px;box-sizing:border-box;background:linear-gradient(to right,#aaaaaa 0px,#aaaaaa 9.33px,#959595 10.13px,#8c8c8c 11.64px,#3e3e3e 19.40px,#3e3e3e 19.2px,#323232 20px);"></div><div style="position:absolute;left:1480px;top:438px;width:20px;height:4px;box-sizing:border-box;background:linear-gradient(to left,#aaaaaa 0px,#aaaaaa 9.33px,#959595 10.13px,#8c8c8c 11.64px,#3e3e3e 19.40px,#3e3e3e 19.2px,#323232 20px);"></div><div style="position:absolute;left:0px;top:442px;width:20px;height:4px;box-sizing:border-box;background:linear-gradient(to right,#aaaaaa 0px,#aaaaaa 9.40px,#959595 10.20px,#8c8c8c 11.70px,#3e3e3e 19.40px,#3e3e3e 19.2px,#323232 20px);"></div><div style="position:absolute;left:1480px;top:442px;width:20px;height:4px;box-sizing:border-box;background:linear-gradient(to left,#aaaaaa 0px,#aaaaaa 9.40px,#959595 10.20px,#8c8c8c 11.70px,#3e3e3e 19.40px,#3e3e3e 19.2px,#323232 20px);"></div><div style="position:absolute;left:0px;top:446px;width:20px;height:4px;box-sizing:border-box;background:linear-gradient(to right,#aaaaaa 0px,#aaaaaa 9.47px,#959595 10.27px,#8c8c8c 11.76px,#3e3e3e 19.40px,#3e3e3e 19.2px,#323232 20px);"></div><div style="position:absolute;left:1480px;top:446px;width:20px;height:4px;box-sizing:border-box;background:linear-gradient(to left,#aaaaaa 0px,#aaaaaa 9.47px,#959595 10.27px,#8c8c8c 11.76px,#3e3e3e 19.40px,#3e3e3e 19.2px,#323232 20px);"></div><div style="position:absolute;left:0px;top:450px;width:20px;height:4px;box-sizing:border-box;background:linear-gradient(to right,#aaaaaa 0px,#aaaaaa 9.53px,#959595 10.33px,#8c8c8c 11.81px,#3f3f3f 19.40px,#3f3f3f 19.2px,#333333 20px);"></div><div style="position:absolute;left:1480px;top:450px;width:20px;height:4px;box-sizing:border-box;background:linear-gradient(to left,#aaaaaa 0px,#aaaaaa 9.53px,#959595 10.33px,#8c8c8c 11.81px,#3f3f3f 19.40px,#3f3f3f 19.2px,#333333 20px);"></div><div style="position:absolute;left:0px;top:454px;width:20px;height:4px;box-sizing:border-box;background:linear-gradient(to right,#aaaaaa 0px,#aaaaaa 9.60px,#959595 10.40px,#8c8c8c 11.87px,#3f3f3f 19.40px,#3f3f3f 19.2px,#333333 20px);"></div><div style="position:absolute;left:1480px;top:454px;width:20px;height:4px;box-sizing:border-box;background:linear-gradient(to left,#aaaaaa 0px,#aaaaaa 9.60px,#959595 10.40px,#8c8c8c 11.87px,#3f3f3f 19.40px,#3f3f3f 19.2px,#333333 20px);"></div><div style="position:absolute;left:0px;top:458px;width:20px;height:4px;box-sizing:border-box;background:linear-gradient(to right,#aaaaaa 0px,#aaaaaa 9.67px,#959595 10.47px,#8c8c8c 11.93px,#3f3f3f 19.40px,#3f3f3f 19.2px,#333333 20px);"></div><div style="position:absolute;left:1480px;top:458px;width:20px;height:4px;box-sizing:border-box;background:linear-gradient(to left,#aaaaaa 0px,#aaaaaa 9.67px,#959595 10.47px,#8c8c8c 11.93px,#3f3f3f 19.40px,#3f3f3f 19.2px,#333333 20px);"></div><div style="position:absolute;left:0px;top:462px;width:20px;height:4px;box-sizing:border-box;background:linear-gradient(to right,#aaaaaa 0px,#aaaaaa 9.73px,#959595 10.53px,#8c8c8c 11.98px,#3f3f3f 19.40px,#3f3f3f 19.2px,#333333 20px);"></div><div style="position:absolute;left:1480px;top:462px;width:20px;height:4px;box-sizing:border-box;background:linear-gradient(to left,#aaaaaa 0px,#aaaaaa 9.73px,#959595 10.53px,#8c8c8c 11.98px,#3f3f3f 19.40px,#3f3f3f 19.2px,#333333 20px);"></div><div style="position:absolute;left:0px;top:466px;width:20px;height:4px;box-sizing:border-box;background:linear-gradient(to right,#aaaaaa 0px,#aaaaaa 9.80px,#959595 10.60px,#8c8c8c 12.04px,#3f3f3f 19.40px,#3f3f3f 19.2px,#333333 20px);"></div><div style="position:absolute;left:1480px;top:466px;width:20px;height:4px;box-sizing:border-box;background:linear-gradient(to left,#aaaaaa 0px,#aaaaaa 9.80px,#959595 10.60px,#8c8c8c 12.04px,#3f3f3f 19.40px,#3f3f3f 19.2px,#333333 20px);"></div><div style="position:absolute;left:0px;top:470px;width:20px;height:4px;box-sizing:border-box;background:linear-gradient(to right,#aaaaaa 0px,#aaaaaa 9.87px,#959595 10.67px,#8c8c8c 12.10px,#3f3f3f 19.40px,#3f3f3f 19.2px,#333333 20px);"></div><div style="position:absolute;left:1480px;top:470px;width:20px;height:4px;box-sizing:border-box;background:linear-gradient(to left,#aaaaaa 0px,#aaaaaa 9.87px,#959595 10.67px,#8c8c8c 12.10px,#3f3f3f 19.40px,#3f3f3f 19.2px,#333333 20px);"></div><div style="position:absolute;left:0px;top:474px;width:20px;height:4px;box-sizing:border-box;background:linear-gradient(to right,#aaaaaa 0px,#aaaaaa 9.93px,#959595 10.73px,#8c8c8c 12.15px,#3f3f3f 19.40px,#3f3f3f 19.2px,#333333 20px);"></div><div style="position:absolute;left:1480px;top:474px;width:20px;height:4px;box-sizing:border-box;background:linear-gradient(to left,#aaaaaa 0px,#aaaaaa 9.93px,#959595 10.73px,#8c8c8c 12.15px,#3f3f3f 19.40px,#3f3f3f 19.2px,#333333 20px);"></div><div style="position:absolute;left:0px;top:478px;width:20px;height:4px;box-sizing:border-box;background:linear-gradient(to right,#aaaaaa 0px,#aaaaaa 10.00px,#959595 10.80px,#8c8c8c 12.21px,#404040 19.40px,#404040 19.2px,#343434 20px);"></div><div style="position:absolute;left:1480px;top:478px;width:20px;height:4px;box-sizing:border-box;background:linear-gradient(to left,#aaaaaa 0px,#aaaaaa 10.00px,#959595 10.80px,#8c8c8c 12.21px,#404040 19.40px,#404040 19.2px,#343434 20px);"></div><div style="position:absolute;left:0px;top:482px;width:20px;height:4px;box-sizing:border-box;background:linear-gradient(to right,#aaaaaa 0px,#aaaaaa 10.07px,#959595 10.87px,#8c8c8c 12.27px,#404040 19.40px,#404040 19.2px,#343434 20px);"></div><div style="position:absolute;left:1480px;top:482px;width:20px;height:4px;box-sizing:border-box;background:linear-gradient(to left,#aaaaaa 0px,#aaaaaa 10.07px,#959595 10.87px,#8c8c8c 12.27px,#404040 19.40px,#404040 19.2px,#343434 20px);"></div><div style="position:absolute;left:0px;top:486px;width:20px;height:4px;box-sizing:border-box;background:linear-gradient(to right,#aaaaaa 0px,#aaaaaa 10.13px,#959595 10.93px,#8c8c8c 12.32px,#404040 19.40px,#404040 19.2px,#343434 20px);"></div><div style="position:absolute;left:1480px;top:486px;width:20px;height:4px;box-sizing:border-box;background:linear-gradient(to left,#aaaaaa 0px,#aaaaaa 10.13px,#959595 10.93px,#8c8c8c 12.32px,#404040 19.40px,#404040 19.2px,#343434 20px);"></div><div style="position:absolute;left:0px;top:490px;width:20px;height:4px;box-sizing:border-box;background:linear-gradient(to right,#aaaaaa 0px,#aaaaaa 10.20px,#959595 11.00px,#8c8c8c 12.38px,#404040 19.40px,#404040 19.2px,#343434 20px);"></div><div style="position:absolute;left:1480px;top:490px;width:20px;height:4px;box-sizing:border-box;background:linear-gradient(to left,#aaaaaa 0px,#aaaaaa 10.20px,#959595 11.00px,#8c8c8c 12.38px,#404040 19.40px,#404040 19.2px,#343434 20px);"></div><div style="position:absolute;left:0px;top:494px;width:20px;height:4px;box-sizing:border-box;background:linear-gradient(to right,#aaaaaa 0px,#aaaaaa 10.27px,#959595 11.07px,#8c8c8c 12.44px,#404040 19.40px,#404040 19.2px,#343434 20px);"></div><div style="position:absolute;left:1480px;top:494px;width:20px;height:4px;box-sizing:border-box;background:linear-gradient(to left,#aaaaaa 0px,#aaaaaa 10.27px,#959595 11.07px,#8c8c8c 12.44px,#404040 19.40px,#404040 19.2px,#343434 20px);"></div><div style="position:absolute;left:0px;top:498px;width:20px;height:4px;box-sizing:border-box;background:linear-gradient(to right,#aaaaaa 0px,#aaaaaa 10.33px,#959595 11.13px,#8c8c8c 12.49px,#404040 19.40px,#404040 19.2px,#343434 20px);"></div><div style="position:absolute;left:1480px;top:498px;width:20px;height:4px;box-sizing:border-box;background:linear-gradient(to left,#aaaaaa 0px,#aaaaaa 10.33px,#959595 11.13px,#8c8c8c 12.49px,#404040 19.40px,#404040 19.2px,#343434 20px);"></div><div style="position:absolute;left:0px;top:502px;width:20px;height:4px;box-sizing:border-box;background:linear-gradient(to right,#aaaaaa 0px,#aaaaaa 10.40px,#959595 11.20px,#8c8c8c 12.55px,#404040 19.40px,#404040 19.2px,#343434 20px);"></div><div style="position:absolute;left:1480px;top:502px;width:20px;height:4px;box-sizing:border-box;background:linear-gradient(to left,#aaaaaa 0px,#aaaaaa 10.40px,#959595 11.20px,#8c8c8c 12.55px,#404040 19.40px,#404040 19.2px,#343434 20px);"></div><div style="position:absolute;left:0px;top:506px;width:20px;height:4px;box-sizing:border-box;background:linear-gradient(to right,#aaaaaa 0px,#aaaaaa 10.47px,#959595 11.27px,#8c8c8c 12.61px,#404040 19.40px,#404040 19.2px,#343434 20px);"></div><div style="position:absolute;left:1480px;top:506px;width:20px;height:4px;box-sizing:border-box;background:linear-gradient(to left,#aaaaaa 0px,#aaaaaa 10.47px,#959595 11.27px,#8c8c8c 12.61px,#404040 19.40px,#404040 19.2px,#343434 20px);"></div><div style="position:absolute;left:0px;top:510px;width:20px;height:4px;box-sizing:border-box;background:linear-gradient(to right,#aaaaaa 0px,#aaaaaa 10.53px,#959595 11.33px,#8c8c8c 12.66px,#414141 19.40px,#414141 19.2px,#353535 20px);"></div><div style="position:absolute;left:1480px;top:510px;width:20px;height:4px;box-sizing:border-box;background:linear-gradient(to left,#aaaaaa 0px,#aaaaaa 10.53px,#959595 11.33px,#8c8c8c 12.66px,#414141 19.40px,#414141 19.2px,#353535 20px);"></div><div style="position:absolute;left:0px;top:514px;width:20px;height:4px;box-sizing:border-box;background:linear-gradient(to right,#aaaaaa 0px,#aaaaaa 10.60px,#959595 11.40px,#8c8c8c 12.72px,#414141 19.40px,#414141 19.2px,#353535 20px);"></div><div style="position:absolute;left:1480px;top:514px;width:20px;height:4px;box-sizing:border-box;background:linear-gradient(to left,#aaaaaa 0px,#aaaaaa 10.60px,#959595 11.40px,#8c8c8c 12.72px,#414141 19.40px,#414141 19.2px,#353535 20px);"></div><div style="position:absolute;left:0px;top:518px;width:20px;height:4px;box-sizing:border-box;background:linear-gradient(to right,#aaaaaa 0px,#aaaaaa 10.67px,#959595 11.47px,#8c8c8c 12.78px,#414141 19.40px,#414141 19.2px,#353535 20px);"></div><div style="position:absolute;left:1480px;top:518px;width:20px;height:4px;box-sizing:border-box;background:linear-gradient(to left,#aaaaaa 0px,#aaaaaa 10.67px,#959595 11.47px,#8c8c8c 12.78px,#414141 19.40px,#414141 19.2px,#353535 20px);"></div><div style="position:absolute;left:0px;top:522px;width:20px;height:4px;box-sizing:border-box;background:linear-gradient(to right,#aaaaaa 0px,#aaaaaa 10.73px,#959595 11.53px,#8c8c8c 12.83px,#414141 19.40px,#414141 19.2px,#353535 20px);"></div><div style="position:absolute;left:1480px;top:522px;width:20px;height:4px;box-sizing:border-box;background:linear-gradient(to left,#aaaaaa 0px,#aaaaaa 10.73px,#959595 11.53px,#8c8c8c 12.83px,#414141 19.40px,#414141 19.2px,#353535 20px);"></div><div style="position:absolute;left:0px;top:526px;width:20px;height:4px;box-sizing:border-box;background:linear-gradient(to right,#aaaaaa 0px,#aaaaaa 10.80px,#959595 11.60px,#8c8c8c 12.89px,#414141 19.40px,#414141 19.2px,#353535 20px);"></div><div style="position:absolute;left:1480px;top:526px;width:20px;height:4px;box-sizing:border-box;background:linear-gradient(to left,#aaaaaa 0px,#aaaaaa 10.80px,#959595 11.60px,#8c8c8c 12.89px,#414141 19.40px,#414141 19.2px,#353535 20px);"></div><div style="position:absolute;left:0px;top:530px;width:20px;height:4px;box-sizing:border-box;background:linear-gradient(to right,#aaaaaa 0px,#aaaaaa 10.87px,#959595 11.67px,#8c8c8c 12.95px,#414141 19.40px,#414141 19.2px,#353535 20px);"></div><div style="position:absolute;left:1480px;top:530px;width:20px;height:4px;box-sizing:border-box;background:linear-gradient(to left,#aaaaaa 0px,#aaaaaa 10.87px,#959595 11.67px,#8c8c8c 12.95px,#414141 19.40px,#414141 19.2px,#353535 20px);"></div><div style="position:absolute;left:0px;top:534px;width:20px;height:4px;box-sizing:border-box;background:linear-gradient(to right,#aaaaaa 0px,#aaaaaa 10.93px,#959595 11.73px,#8c8c8c 13.00px,#414141 19.40px,#414141 19.2px,#353535 20px);"></div><div style="position:absolute;left:1480px;top:534px;width:20px;height:4px;box-sizing:border-box;background:linear-gradient(to left,#aaaaaa 0px,#aaaaaa 10.93px,#959595 11.73px,#8c8c8c 13.00px,#414141 19.40px,#414141 19.2px,#353535 20px);"></div><div style="position:absolute;left:0px;top:538px;width:20px;height:4px;box-sizing:border-box;background:linear-gradient(to right,#aaaaaa 0px,#aaaaaa 11.00px,#959595 11.80px,#8c8c8c 13.06px,#424242 19.40px,#424242 19.2px,#363636 20px);"></div><div style="position:absolute;left:1480px;top:538px;width:20px;height:4px;box-sizing:border-box;background:linear-gradient(to left,#aaaaaa 0px,#aaaaaa 11.00px,#959595 11.80px,#8c8c8c 13.06px,#424242 19.40px,#424242 19.2px,#363636 20px);"></div><div style="position:absolute;left:0px;top:542px;width:20px;height:4px;box-sizing:border-box;background:linear-gradient(to right,#aaaaaa 0px,#aaaaaa 11.07px,#959595 11.87px,#8c8c8c 13.12px,#424242 19.40px,#424242 19.2px,#363636 20px);"></div><div style="position:absolute;left:1480px;top:542px;width:20px;height:4px;box-sizing:border-box;background:linear-gradient(to left,#aaaaaa 0px,#aaaaaa 11.07px,#959595 11.87px,#8c8c8c 13.12px,#424242 19.40px,#424242 19.2px,#363636 20px);"></div><div style="position:absolute;left:0px;top:546px;width:20px;height:4px;box-sizing:border-box;background:linear-gradient(to right,#aaaaaa 0px,#aaaaaa 11.13px,#959595 11.93px,#8c8c8c 13.17px,#424242 19.40px,#424242 19.2px,#363636 20px);"></div><div style="position:absolute;left:1480px;top:546px;width:20px;height:4px;box-sizing:border-box;background:linear-gradient(to left,#aaaaaa 0px,#aaaaaa 11.13px,#959595 11.93px,#8c8c8c 13.17px,#424242 19.40px,#424242 19.2px,#363636 20px);"></div><div style="position:absolute;left:0px;top:550px;width:20px;height:4px;box-sizing:border-box;background:linear-gradient(to right,#aaaaaa 0px,#aaaaaa 11.20px,#959595 12.00px,#8c8c8c 13.23px,#424242 19.40px,#424242 19.2px,#363636 20px);"></div><div style="position:absolute;left:1480px;top:550px;width:20px;height:4px;box-sizing:border-box;background:linear-gradient(to left,#aaaaaa 0px,#aaaaaa 11.20px,#959595 12.00px,#8c8c8c 13.23px,#424242 19.40px,#424242 19.2px,#363636 20px);"></div><div style="position:absolute;left:0px;top:554px;width:20px;height:4px;box-sizing:border-box;background:linear-gradient(to right,#aaaaaa 0px,#aaaaaa 11.27px,#959595 12.07px,#8c8c8c 13.29px,#424242 19.40px,#424242 19.2px,#363636 20px);"></div><div style="position:absolute;left:1480px;top:554px;width:20px;height:4px;box-sizing:border-box;background:linear-gradient(to left,#aaaaaa 0px,#aaaaaa 11.27px,#959595 12.07px,#8c8c8c 13.29px,#424242 19.40px,#424242 19.2px,#363636 20px);"></div><div style="position:absolute;left:0px;top:558px;width:20px;height:4px;box-sizing:border-box;background:linear-gradient(to right,#aaaaaa 0px,#aaaaaa 11.33px,#959595 12.13px,#8c8c8c 13.34px,#424242 19.40px,#424242 19.2px,#363636 20px);"></div><div style="position:absolute;left:1480px;top:558px;width:20px;height:4px;box-sizing:border-box;background:linear-gradient(to left,#aaaaaa 0px,#aaaaaa 11.33px,#959595 12.13px,#8c8c8c 13.34px,#424242 19.40px,#424242 19.2px,#363636 20px);"></div><div style="position:absolute;left:0px;top:562px;width:20px;height:4px;box-sizing:border-box;background:linear-gradient(to right,#aaaaaa 0px,#aaaaaa 11.40px,#959595 12.20px,#8c8c8c 13.40px,#424242 19.40px,#424242 19.2px,#363636 20px);"></div><div style="position:absolute;left:1480px;top:562px;width:20px;height:4px;box-sizing:border-box;background:linear-gradient(to left,#aaaaaa 0px,#aaaaaa 11.40px,#959595 12.20px,#8c8c8c 13.40px,#424242 19.40px,#424242 19.2px,#363636 20px);"></div><div style="position:absolute;left:0px;top:566px;width:20px;height:4px;box-sizing:border-box;background:linear-gradient(to right,#aaaaaa 0px,#aaaaaa 11.47px,#959595 12.27px,#8c8c8c 13.46px,#424242 19.40px,#424242 19.2px,#363636 20px);"></div><div style="position:absolute;left:1480px;top:566px;width:20px;height:4px;box-sizing:border-box;background:linear-gradient(to left,#aaaaaa 0px,#aaaaaa 11.47px,#959595 12.27px,#8c8c8c 13.46px,#424242 19.40px,#424242 19.2px,#363636 20px);"></div><div style="position:absolute;left:0px;top:570px;width:20px;height:4px;box-sizing:border-box;background:linear-gradient(to right,#aaaaaa 0px,#aaaaaa 11.53px,#959595 12.33px,#8c8c8c 13.51px,#434343 19.40px,#434343 19.2px,#373737 20px);"></div><div style="position:absolute;left:1480px;top:570px;width:20px;height:4px;box-sizing:border-box;background:linear-gradient(to left,#aaaaaa 0px,#aaaaaa 11.53px,#959595 12.33px,#8c8c8c 13.51px,#434343 19.40px,#434343 19.2px,#373737 20px);"></div><div style="position:absolute;left:0px;top:574px;width:20px;height:4px;box-sizing:border-box;background:linear-gradient(to right,#aaaaaa 0px,#aaaaaa 11.60px,#959595 12.40px,#8c8c8c 13.57px,#434343 19.40px,#434343 19.2px,#373737 20px);"></div><div style="position:absolute;left:1480px;top:574px;width:20px;height:4px;box-sizing:border-box;background:linear-gradient(to left,#aaaaaa 0px,#aaaaaa 11.60px,#959595 12.40px,#8c8c8c 13.57px,#434343 19.40px,#434343 19.2px,#373737 20px);"></div><div style="position:absolute;left:0px;top:578px;width:20px;height:4px;box-sizing:border-box;background:linear-gradient(to right,#aaaaaa 0px,#aaaaaa 11.67px,#959595 12.47px,#8c8c8c 13.63px,#434343 19.40px,#434343 19.2px,#373737 20px);"></div><div style="position:absolute;left:1480px;top:578px;width:20px;height:4px;box-sizing:border-box;background:linear-gradient(to left,#aaaaaa 0px,#aaaaaa 11.67px,#959595 12.47px,#8c8c8c 13.63px,#434343 19.40px,#434343 19.2px,#373737 20px);"></div><div style="position:absolute;left:0px;top:582px;width:20px;height:4px;box-sizing:border-box;background:linear-gradient(to right,#aaaaaa 0px,#aaaaaa 11.73px,#959595 12.53px,#8c8c8c 13.68px,#434343 19.40px,#434343 19.2px,#373737 20px);"></div><div style="position:absolute;left:1480px;top:582px;width:20px;height:4px;box-sizing:border-box;background:linear-gradient(to left,#aaaaaa 0px,#aaaaaa 11.73px,#959595 12.53px,#8c8c8c 13.68px,#434343 19.40px,#434343 19.2px,#373737 20px);"></div><div style="position:absolute;left:0px;top:586px;width:20px;height:4px;box-sizing:border-box;background:linear-gradient(to right,#aaaaaa 0px,#aaaaaa 11.80px,#959595 12.60px,#8c8c8c 13.74px,#434343 19.40px,#434343 19.2px,#373737 20px);"></div><div style="position:absolute;left:1480px;top:586px;width:20px;height:4px;box-sizing:border-box;background:linear-gradient(to left,#aaaaaa 0px,#aaaaaa 11.80px,#959595 12.60px,#8c8c8c 13.74px,#434343 19.40px,#434343 19.2px,#373737 20px);"></div><div style="position:absolute;left:0px;top:590px;width:20px;height:4px;box-sizing:border-box;background:linear-gradient(to right,#aaaaaa 0px,#aaaaaa 11.87px,#959595 12.67px,#8c8c8c 13.80px,#434343 19.40px,#434343 19.2px,#373737 20px);"></div><div style="position:absolute;left:1480px;top:590px;width:20px;height:4px;box-sizing:border-box;background:linear-gradient(to left,#aaaaaa 0px,#aaaaaa 11.87px,#959595 12.67px,#8c8c8c 13.80px,#434343 19.40px,#434343 19.2px,#373737 20px);"></div><div style="position:absolute;left:0px;top:594px;width:20px;height:4px;box-sizing:border-box;background:linear-gradient(to right,#aaaaaa 0px,#aaaaaa 11.93px,#959595 12.73px,#8c8c8c 13.85px,#434343 19.40px,#434343 19.2px,#373737 20px);"></div><div style="position:absolute;left:1480px;top:594px;width:20px;height:4px;box-sizing:border-box;background:linear-gradient(to left,#aaaaaa 0px,#aaaaaa 11.93px,#959595 12.73px,#8c8c8c 13.85px,#434343 19.40px,#434343 19.2px,#373737 20px);"></div><div style="position:absolute;left:0px;top:598px;width:20px;height:4px;box-sizing:border-box;background:linear-gradient(to right,#aaaaaa 0px,#aaaaaa 12.00px,#959595 12.80px,#8c8c8c 13.91px,#444444 19.40px,#444444 19.2px,#383838 20px);"></div><div style="position:absolute;left:1480px;top:598px;width:20px;height:4px;box-sizing:border-box;background:linear-gradient(to left,#aaaaaa 0px,#aaaaaa 12.00px,#959595 12.80px,#8c8c8c 13.91px,#444444 19.40px,#444444 19.2px,#383838 20px);"></div><div style="position:absolute;left:0px;top:602px;width:20px;height:4px;box-sizing:border-box;background:linear-gradient(to right,#aaaaaa 0px,#aaaaaa 12.05px,#959595 12.85px,#8c8c8c 13.95px,#444444 19.40px,#444444 19.2px,#383838 20px);"></div><div style="position:absolute;left:1480px;top:602px;width:20px;height:4px;box-sizing:border-box;background:linear-gradient(to left,#aaaaaa 0px,#aaaaaa 12.05px,#959595 12.85px,#8c8c8c 13.95px,#444444 19.40px,#444444 19.2px,#383838 20px);"></div><div style="position:absolute;left:0px;top:606px;width:20px;height:4px;box-sizing:border-box;background:linear-gradient(to right,#aaaaaa 0px,#aaaaaa 12.10px,#959595 12.90px,#8c8c8c 14.00px,#444444 19.40px,#444444 19.2px,#383838 20px);"></div><div style="position:absolute;left:1480px;top:606px;width:20px;height:4px;box-sizing:border-box;background:linear-gradient(to left,#aaaaaa 0px,#aaaaaa 12.10px,#959595 12.90px,#8c8c8c 14.00px,#444444 19.40px,#444444 19.2px,#383838 20px);"></div><div style="position:absolute;left:0px;top:610px;width:20px;height:4px;box-sizing:border-box;background:linear-gradient(to right,#aaaaaa 0px,#aaaaaa 12.15px,#959595 12.95px,#8c8c8c 14.04px,#454545 19.40px,#454545 19.2px,#393939 20px);"></div><div style="position:absolute;left:1480px;top:610px;width:20px;height:4px;box-sizing:border-box;background:linear-gradient(to left,#aaaaaa 0px,#aaaaaa 12.15px,#959595 12.95px,#8c8c8c 14.04px,#454545 19.40px,#454545 19.2px,#393939 20px);"></div><div style="position:absolute;left:0px;top:614px;width:20px;height:4px;box-sizing:border-box;background:linear-gradient(to right,#aaaaaa 0px,#aaaaaa 12.20px,#959595 13.00px,#8c8c8c 14.08px,#454545 19.40px,#454545 19.2px,#393939 20px);"></div><div style="position:absolute;left:1480px;top:614px;width:20px;height:4px;box-sizing:border-box;background:linear-gradient(to left,#aaaaaa 0px,#aaaaaa 12.20px,#959595 13.00px,#8c8c8c 14.08px,#454545 19.40px,#454545 19.2px,#393939 20px);"></div><div style="position:absolute;left:0px;top:618px;width:20px;height:4px;box-sizing:border-box;background:linear-gradient(to right,#aaaaaa 0px,#aaaaaa 12.25px,#959595 13.05px,#8c8c8c 14.12px,#464646 19.40px,#464646 19.2px,#3a3a3a 20px);"></div><div style="position:absolute;left:1480px;top:618px;width:20px;height:4px;box-sizing:border-box;background:linear-gradient(to left,#aaaaaa 0px,#aaaaaa 12.25px,#959595 13.05px,#8c8c8c 14.12px,#464646 19.40px,#464646 19.2px,#3a3a3a 20px);"></div><div style="position:absolute;left:0px;top:622px;width:20px;height:4px;box-sizing:border-box;background:linear-gradient(to right,#aaaaaa 0px,#aaaaaa 12.30px,#959595 13.10px,#8c8c8c 14.17px,#464646 19.40px,#464646 19.2px,#3a3a3a 20px);"></div><div style="position:absolute;left:1480px;top:622px;width:20px;height:4px;box-sizing:border-box;background:linear-gradient(to left,#aaaaaa 0px,#aaaaaa 12.30px,#959595 13.10px,#8c8c8c 14.17px,#464646 19.40px,#464646 19.2px,#3a3a3a 20px);"></div><div style="position:absolute;left:0px;top:626px;width:20px;height:4px;box-sizing:border-box;background:linear-gradient(to right,#aaaaaa 0px,#aaaaaa 12.35px,#959595 13.15px,#8c8c8c 14.21px,#474747 19.40px,#474747 19.2px,#3b3b3b 20px);"></div><div style="position:absolute;left:1480px;top:626px;width:20px;height:4px;box-sizing:border-box;background:linear-gradient(to left,#aaaaaa 0px,#aaaaaa 12.35px,#959595 13.15px,#8c8c8c 14.21px,#474747 19.40px,#474747 19.2px,#3b3b3b 20px);"></div><div style="position:absolute;left:0px;top:630px;width:20px;height:4px;box-sizing:border-box;background:linear-gradient(to right,#aaaaaa 0px,#aaaaaa 12.40px,#959595 13.20px,#8c8c8c 14.25px,#474747 19.40px,#474747 19.2px,#3b3b3b 20px);"></div><div style="position:absolute;left:1480px;top:630px;width:20px;height:4px;box-sizing:border-box;background:linear-gradient(to left,#aaaaaa 0px,#aaaaaa 12.40px,#959595 13.20px,#8c8c8c 14.25px,#474747 19.40px,#474747 19.2px,#3b3b3b 20px);"></div><div style="position:absolute;left:0px;top:634px;width:20px;height:4px;box-sizing:border-box;background:linear-gradient(to right,#aaaaaa 0px,#aaaaaa 12.45px,#959595 13.25px,#8c8c8c 14.29px,#474747 19.40px,#474747 19.2px,#3b3b3b 20px);"></div><div style="position:absolute;left:1480px;top:634px;width:20px;height:4px;box-sizing:border-box;background:linear-gradient(to left,#aaaaaa 0px,#aaaaaa 12.45px,#959595 13.25px,#8c8c8c 14.29px,#474747 19.40px,#474747 19.2px,#3b3b3b 20px);"></div><div style="position:absolute;left:0px;top:638px;width:20px;height:4px;box-sizing:border-box;background:linear-gradient(to right,#aaaaaa 0px,#aaaaaa 12.50px,#959595 13.30px,#8c8c8c 14.34px,#484848 19.40px,#484848 19.2px,#3c3c3c 20px);"></div><div style="position:absolute;left:1480px;top:638px;width:20px;height:4px;box-sizing:border-box;background:linear-gradient(to left,#aaaaaa 0px,#aaaaaa 12.50px,#959595 13.30px,#8c8c8c 14.34px,#484848 19.40px,#484848 19.2px,#3c3c3c 20px);"></div><div style="position:absolute;left:0px;top:642px;width:20px;height:4px;box-sizing:border-box;background:linear-gradient(to right,#aaaaaa 0px,#aaaaaa 12.55px,#959595 13.35px,#8c8c8c 14.38px,#484848 19.40px,#484848 19.2px,#3c3c3c 20px);"></div><div style="position:absolute;left:1480px;top:642px;width:20px;height:4px;box-sizing:border-box;background:linear-gradient(to left,#aaaaaa 0px,#aaaaaa 12.55px,#959595 13.35px,#8c8c8c 14.38px,#484848 19.40px,#484848 19.2px,#3c3c3c 20px);"></div><div style="position:absolute;left:0px;top:646px;width:20px;height:4px;box-sizing:border-box;background:linear-gradient(to right,#aaaaaa 0px,#aaaaaa 12.60px,#959595 13.40px,#8c8c8c 14.42px,#494949 19.40px,#494949 19.2px,#3d3d3d 20px);"></div><div style="position:absolute;left:1480px;top:646px;width:20px;height:4px;box-sizing:border-box;background:linear-gradient(to left,#aaaaaa 0px,#aaaaaa 12.60px,#959595 13.40px,#8c8c8c 14.42px,#494949 19.40px,#494949 19.2px,#3d3d3d 20px);"></div><div style="position:absolute;left:0px;top:650px;width:20px;height:4px;box-sizing:border-box;background:linear-gradient(to right,#aaaaaa 0px,#aaaaaa 12.65px,#959595 13.45px,#8c8c8c 14.46px,#494949 19.40px,#494949 19.2px,#3d3d3d 20px);"></div><div style="position:absolute;left:1480px;top:650px;width:20px;height:4px;box-sizing:border-box;background:linear-gradient(to left,#aaaaaa 0px,#aaaaaa 12.65px,#959595 13.45px,#8c8c8c 14.46px,#494949 19.40px,#494949 19.2px,#3d3d3d 20px);"></div><div style="position:absolute;left:0px;top:654px;width:20px;height:4px;box-sizing:border-box;background:linear-gradient(to right,#aaaaaa 0px,#aaaaaa 12.70px,#959595 13.50px,#8c8c8c 14.50px,#4a4a4a 19.40px,#4a4a4a 19.2px,#3e3e3e 20px);"></div><div style="position:absolute;left:1480px;top:654px;width:20px;height:4px;box-sizing:border-box;background:linear-gradient(to left,#aaaaaa 0px,#aaaaaa 12.70px,#959595 13.50px,#8c8c8c 14.50px,#4a4a4a 19.40px,#4a4a4a 19.2px,#3e3e3e 20px);"></div><div style="position:absolute;left:0px;top:658px;width:20px;height:4px;box-sizing:border-box;background:linear-gradient(to right,#aaaaaa 0px,#aaaaaa 12.75px,#959595 13.55px,#8c8c8c 14.55px,#4a4a4a 19.40px,#4a4a4a 19.2px,#3e3e3e 20px);"></div><div style="position:absolute;left:1480px;top:658px;width:20px;height:4px;box-sizing:border-box;background:linear-gradient(to left,#aaaaaa 0px,#aaaaaa 12.75px,#959595 13.55px,#8c8c8c 14.55px,#4a4a4a 19.40px,#4a4a4a 19.2px,#3e3e3e 20px);"></div><div style="position:absolute;left:0px;top:662px;width:20px;height:4px;box-sizing:border-box;background:linear-gradient(to right,#aaaaaa 0px,#aaaaaa 12.80px,#959595 13.60px,#8c8c8c 14.59px,#4b4b4b 19.40px,#4b4b4b 19.2px,#3f3f3f 20px);"></div><div style="position:absolute;left:1480px;top:662px;width:20px;height:4px;box-sizing:border-box;background:linear-gradient(to left,#aaaaaa 0px,#aaaaaa 12.80px,#959595 13.60px,#8c8c8c 14.59px,#4b4b4b 19.40px,#4b4b4b 19.2px,#3f3f3f 20px);"></div><div style="position:absolute;left:0px;top:666px;width:20px;height:4px;box-sizing:border-box;background:linear-gradient(to right,#aaaaaa 0px,#aaaaaa 12.85px,#959595 13.65px,#8c8c8c 14.63px,#4b4b4b 19.40px,#4b4b4b 19.2px,#3f3f3f 20px);"></div><div style="position:absolute;left:1480px;top:666px;width:20px;height:4px;box-sizing:border-box;background:linear-gradient(to left,#aaaaaa 0px,#aaaaaa 12.85px,#959595 13.65px,#8c8c8c 14.63px,#4b4b4b 19.40px,#4b4b4b 19.2px,#3f3f3f 20px);"></div><div style="position:absolute;left:0px;top:670px;width:20px;height:4px;box-sizing:border-box;background:linear-gradient(to right,#aaaaaa 0px,#aaaaaa 12.90px,#959595 13.70px,#8c8c8c 14.68px,#4b4b4b 19.40px,#4b4b4b 19.2px,#3f3f3f 20px);"></div><div style="position:absolute;left:1480px;top:670px;width:20px;height:4px;box-sizing:border-box;background:linear-gradient(to left,#aaaaaa 0px,#aaaaaa 12.90px,#959595 13.70px,#8c8c8c 14.68px,#4b4b4b 19.40px,#4b4b4b 19.2px,#3f3f3f 20px);"></div><div style="position:absolute;left:0px;top:674px;width:20px;height:4px;box-sizing:border-box;background:linear-gradient(to right,#aaaaaa 0px,#aaaaaa 12.95px,#959595 13.75px,#8c8c8c 14.72px,#4c4c4c 19.40px,#4c4c4c 19.2px,#404040 20px);"></div><div style="position:absolute;left:1480px;top:674px;width:20px;height:4px;box-sizing:border-box;background:linear-gradient(to left,#aaaaaa 0px,#aaaaaa 12.95px,#959595 13.75px,#8c8c8c 14.72px,#4c4c4c 19.40px,#4c4c4c 19.2px,#404040 20px);"></div><div style="position:absolute;left:0px;top:678px;width:20px;height:4px;box-sizing:border-box;background:linear-gradient(to right,#aaaaaa 0px,#aaaaaa 13.00px,#959595 13.80px,#8c8c8c 14.76px,#4c4c4c 19.40px,#4c4c4c 19.2px,#404040 20px);"></div><div style="position:absolute;left:1480px;top:678px;width:20px;height:4px;box-sizing:border-box;background:linear-gradient(to left,#aaaaaa 0px,#aaaaaa 13.00px,#959595 13.80px,#8c8c8c 14.76px,#4c4c4c 19.40px,#4c4c4c 19.2px,#404040 20px);"></div><div style="position:absolute;left:0px;top:682px;width:20px;height:4px;box-sizing:border-box;background:linear-gradient(to right,#aaaaaa 0px,#aaaaaa 13.05px,#959595 13.85px,#8c8c8c 14.80px,#4d4d4d 19.40px,#4d4d4d 19.2px,#414141 20px);"></div><div style="position:absolute;left:1480px;top:682px;width:20px;height:4px;box-sizing:border-box;background:linear-gradient(to left,#aaaaaa 0px,#aaaaaa 13.05px,#959595 13.85px,#8c8c8c 14.80px,#4d4d4d 19.40px,#4d4d4d 19.2px,#414141 20px);"></div><div style="position:absolute;left:0px;top:686px;width:20px;height:4px;box-sizing:border-box;background:linear-gradient(to right,#aaaaaa 0px,#aaaaaa 13.10px,#959595 13.90px,#8c8c8c 14.85px,#4d4d4d 19.40px,#4d4d4d 19.2px,#414141 20px);"></div><div style="position:absolute;left:1480px;top:686px;width:20px;height:4px;box-sizing:border-box;background:linear-gradient(to left,#aaaaaa 0px,#aaaaaa 13.10px,#959595 13.90px,#8c8c8c 14.85px,#4d4d4d 19.40px,#4d4d4d 19.2px,#414141 20px);"></div><div style="position:absolute;left:0px;top:690px;width:20px;height:4px;box-sizing:border-box;background:linear-gradient(to right,#aaaaaa 0px,#aaaaaa 13.15px,#959595 13.95px,#8c8c8c 14.89px,#4e4e4e 19.40px,#4e4e4e 19.2px,#424242 20px);"></div><div style="position:absolute;left:1480px;top:690px;width:20px;height:4px;box-sizing:border-box;background:linear-gradient(to left,#aaaaaa 0px,#aaaaaa 13.15px,#959595 13.95px,#8c8c8c 14.89px,#4e4e4e 19.40px,#4e4e4e 19.2px,#424242 20px);"></div><div style="position:absolute;left:0px;top:694px;width:20px;height:4px;box-sizing:border-box;background:linear-gradient(to right,#aaaaaa 0px,#aaaaaa 13.20px,#959595 14.00px,#8c8c8c 14.93px,#4e4e4e 19.40px,#4e4e4e 19.2px,#424242 20px);"></div><div style="position:absolute;left:1480px;top:694px;width:20px;height:4px;box-sizing:border-box;background:linear-gradient(to left,#aaaaaa 0px,#aaaaaa 13.20px,#959595 14.00px,#8c8c8c 14.93px,#4e4e4e 19.40px,#4e4e4e 19.2px,#424242 20px);"></div><div style="position:absolute;left:0px;top:698px;width:20px;height:4px;box-sizing:border-box;background:linear-gradient(to right,#aaaaaa 0px,#aaaaaa 13.25px,#959595 14.05px,#8c8c8c 14.97px,#4f4f4f 19.40px,#4f4f4f 19.2px,#434343 20px);"></div><div style="position:absolute;left:1480px;top:698px;width:20px;height:4px;box-sizing:border-box;background:linear-gradient(to left,#aaaaaa 0px,#aaaaaa 13.25px,#959595 14.05px,#8c8c8c 14.97px,#4f4f4f 19.40px,#4f4f4f 19.2px,#434343 20px);"></div><div style="position:absolute;left:0px;top:702px;width:20px;height:4px;box-sizing:border-box;background:linear-gradient(to right,#aaaaaa 0px,#aaaaaa 13.30px,#959595 14.10px,#8c8c8c 15.02px,#4f4f4f 19.40px,#4f4f4f 19.2px,#434343 20px);"></div><div style="position:absolute;left:1480px;top:702px;width:20px;height:4px;box-sizing:border-box;background:linear-gradient(to left,#aaaaaa 0px,#aaaaaa 13.30px,#959595 14.10px,#8c8c8c 15.02px,#4f4f4f 19.40px,#4f4f4f 19.2px,#434343 20px);"></div><div style="position:absolute;left:0px;top:706px;width:20px;height:4px;box-sizing:border-box;background:linear-gradient(to right,#aaaaaa 0px,#aaaaaa 13.35px,#959595 14.15px,#8c8c8c 15.06px,#4f4f4f 19.40px,#4f4f4f 19.2px,#434343 20px);"></div><div style="position:absolute;left:1480px;top:706px;width:20px;height:4px;box-sizing:border-box;background:linear-gradient(to left,#aaaaaa 0px,#aaaaaa 13.35px,#959595 14.15px,#8c8c8c 15.06px,#4f4f4f 19.40px,#4f4f4f 19.2px,#434343 20px);"></div><div style="position:absolute;left:0px;top:710px;width:20px;height:4px;box-sizing:border-box;background:linear-gradient(to right,#aaaaaa 0px,#aaaaaa 13.40px,#959595 14.20px,#8c8c8c 15.10px,#505050 19.40px,#505050 19.2px,#444444 20px);"></div><div style="position:absolute;left:1480px;top:710px;width:20px;height:4px;box-sizing:border-box;background:linear-gradient(to left,#aaaaaa 0px,#aaaaaa 13.40px,#959595 14.20px,#8c8c8c 15.10px,#505050 19.40px,#505050 19.2px,#444444 20px);"></div><div style="position:absolute;left:0px;top:714px;width:20px;height:4px;box-sizing:border-box;background:linear-gradient(to right,#aaaaaa 0px,#aaaaaa 13.45px,#959595 14.25px,#8c8c8c 15.14px,#505050 19.40px,#505050 19.2px,#444444 20px);"></div><div style="position:absolute;left:1480px;top:714px;width:20px;height:4px;box-sizing:border-box;background:linear-gradient(to left,#aaaaaa 0px,#aaaaaa 13.45px,#959595 14.25px,#8c8c8c 15.14px,#505050 19.40px,#505050 19.2px,#444444 20px);"></div><div style="position:absolute;left:0px;top:718px;width:20px;height:4px;box-sizing:border-box;background:linear-gradient(to right,#aaaaaa 0px,#aaaaaa 13.50px,#959595 14.30px,#8c8c8c 15.19px,#515151 19.40px,#515151 19.2px,#454545 20px);"></div><div style="position:absolute;left:1480px;top:718px;width:20px;height:4px;box-sizing:border-box;background:linear-gradient(to left,#aaaaaa 0px,#aaaaaa 13.50px,#959595 14.30px,#8c8c8c 15.19px,#515151 19.40px,#515151 19.2px,#454545 20px);"></div><div style="position:absolute;left:0px;top:722px;width:20px;height:4px;box-sizing:border-box;background:linear-gradient(to right,#aaaaaa 0px,#aaaaaa 13.55px,#959595 14.35px,#8c8c8c 15.23px,#515151 19.40px,#515151 19.2px,#454545 20px);"></div><div style="position:absolute;left:1480px;top:722px;width:20px;height:4px;box-sizing:border-box;background:linear-gradient(to left,#aaaaaa 0px,#aaaaaa 13.55px,#959595 14.35px,#8c8c8c 15.23px,#515151 19.40px,#515151 19.2px,#454545 20px);"></div><div style="position:absolute;left:0px;top:726px;width:20px;height:4px;box-sizing:border-box;background:linear-gradient(to right,#aaaaaa 0px,#aaaaaa 13.60px,#959595 14.40px,#8c8c8c 15.27px,#525252 19.40px,#525252 19.2px,#464646 20px);"></div><div style="position:absolute;left:1480px;top:726px;width:20px;height:4px;box-sizing:border-box;background:linear-gradient(to left,#aaaaaa 0px,#aaaaaa 13.60px,#959595 14.40px,#8c8c8c 15.27px,#525252 19.40px,#525252 19.2px,#464646 20px);"></div><div style="position:absolute;left:0px;top:730px;width:20px;height:4px;box-sizing:border-box;background:linear-gradient(to right,#aaaaaa 0px,#aaaaaa 13.65px,#959595 14.45px,#8c8c8c 15.31px,#525252 19.40px,#525252 19.2px,#464646 20px);"></div><div style="position:absolute;left:1480px;top:730px;width:20px;height:4px;box-sizing:border-box;background:linear-gradient(to left,#aaaaaa 0px,#aaaaaa 13.65px,#959595 14.45px,#8c8c8c 15.31px,#525252 19.40px,#525252 19.2px,#464646 20px);"></div><div style="position:absolute;left:0px;top:734px;width:20px;height:4px;box-sizing:border-box;background:linear-gradient(to right,#aaaaaa 0px,#aaaaaa 13.70px,#959595 14.50px,#8c8c8c 15.36px,#525252 19.40px,#525252 19.2px,#464646 20px);"></div><div style="position:absolute;left:1480px;top:734px;width:20px;height:4px;box-sizing:border-box;background:linear-gradient(to left,#aaaaaa 0px,#aaaaaa 13.70px,#959595 14.50px,#8c8c8c 15.36px,#525252 19.40px,#525252 19.2px,#464646 20px);"></div><div style="position:absolute;left:0px;top:738px;width:20px;height:4px;box-sizing:border-box;background:linear-gradient(to right,#aaaaaa 0px,#aaaaaa 13.75px,#959595 14.55px,#8c8c8c 15.40px,#535353 19.40px,#535353 19.2px,#474747 20px);"></div><div style="position:absolute;left:1480px;top:738px;width:20px;height:4px;box-sizing:border-box;background:linear-gradient(to left,#aaaaaa 0px,#aaaaaa 13.75px,#959595 14.55px,#8c8c8c 15.40px,#535353 19.40px,#535353 19.2px,#474747 20px);"></div><div style="position:absolute;left:0px;top:742px;width:20px;height:4px;box-sizing:border-box;background:linear-gradient(to right,#aaaaaa 0px,#aaaaaa 13.80px,#959595 14.60px,#8c8c8c 15.44px,#535353 19.40px,#535353 19.2px,#474747 20px);"></div><div style="position:absolute;left:1480px;top:742px;width:20px;height:4px;box-sizing:border-box;background:linear-gradient(to left,#aaaaaa 0px,#aaaaaa 13.80px,#959595 14.60px,#8c8c8c 15.44px,#535353 19.40px,#535353 19.2px,#474747 20px);"></div><div style="position:absolute;left:0px;top:746px;width:20px;height:4px;box-sizing:border-box;background:linear-gradient(to right,#aaaaaa 0px,#aaaaaa 13.85px,#959595 14.65px,#8c8c8c 15.48px,#545454 19.40px,#545454 19.2px,#484848 20px);"></div><div style="position:absolute;left:1480px;top:746px;width:20px;height:4px;box-sizing:border-box;background:linear-gradient(to left,#aaaaaa 0px,#aaaaaa 13.85px,#959595 14.65px,#8c8c8c 15.48px,#545454 19.40px,#545454 19.2px,#484848 20px);"></div><div style="position:absolute;left:0px;top:750px;width:20px;height:4px;box-sizing:border-box;background:linear-gradient(to right,#aaaaaa 0px,#aaaaaa 13.90px,#959595 14.70px,#8c8c8c 15.53px,#545454 19.40px,#545454 19.2px,#484848 20px);"></div><div style="position:absolute;left:1480px;top:750px;width:20px;height:4px;box-sizing:border-box;background:linear-gradient(to left,#aaaaaa 0px,#aaaaaa 13.90px,#959595 14.70px,#8c8c8c 15.53px,#545454 19.40px,#545454 19.2px,#484848 20px);"></div><div style="position:absolute;left:0px;top:754px;width:20px;height:4px;box-sizing:border-box;background:linear-gradient(to right,#aaaaaa 0px,#aaaaaa 13.95px,#959595 14.75px,#8c8c8c 15.57px,#555555 19.40px,#555555 19.2px,#494949 20px);"></div><div style="position:absolute;left:1480px;top:754px;width:20px;height:4px;box-sizing:border-box;background:linear-gradient(to left,#aaaaaa 0px,#aaaaaa 13.95px,#959595 14.75px,#8c8c8c 15.57px,#555555 19.40px,#555555 19.2px,#494949 20px);"></div><div style="position:absolute;left:0px;top:758px;width:20px;height:4px;box-sizing:border-box;background:linear-gradient(to right,#aaaaaa 0px,#aaaaaa 14.00px,#959595 14.80px,#8c8c8c 15.61px,#555555 19.40px,#555555 19.2px,#494949 20px);"></div><div style="position:absolute;left:1480px;top:758px;width:20px;height:4px;box-sizing:border-box;background:linear-gradient(to left,#aaaaaa 0px,#aaaaaa 14.00px,#959595 14.80px,#8c8c8c 15.61px,#555555 19.40px,#555555 19.2px,#494949 20px);"></div><div style="position:absolute;left:0px;top:762px;width:20px;height:4px;box-sizing:border-box;background:linear-gradient(to right,#aaaaaa 0px,#aaaaaa 14.05px,#959595 14.85px,#8c8c8c 15.65px,#565656 19.40px,#565656 19.2px,#4a4a4a 20px);"></div><div style="position:absolute;left:1480px;top:762px;width:20px;height:4px;box-sizing:border-box;background:linear-gradient(to left,#aaaaaa 0px,#aaaaaa 14.05px,#959595 14.85px,#8c8c8c 15.65px,#565656 19.40px,#565656 19.2px,#4a4a4a 20px);"></div><div style="position:absolute;left:0px;top:766px;width:20px;height:4px;box-sizing:border-box;background:linear-gradient(to right,#aaaaaa 0px,#aaaaaa 14.10px,#959595 14.90px,#8c8c8c 15.70px,#565656 19.40px,#565656 19.2px,#4a4a4a 20px);"></div><div style="position:absolute;left:1480px;top:766px;width:20px;height:4px;box-sizing:border-box;background:linear-gradient(to left,#aaaaaa 0px,#aaaaaa 14.10px,#959595 14.90px,#8c8c8c 15.70px,#565656 19.40px,#565656 19.2px,#4a4a4a 20px);"></div><div style="position:absolute;left:0px;top:770px;width:20px;height:4px;box-sizing:border-box;background:linear-gradient(to right,#aaaaaa 0px,#aaaaaa 14.15px,#959595 14.95px,#8c8c8c 15.74px,#565656 19.40px,#565656 19.2px,#4a4a4a 20px);"></div><div style="position:absolute;left:1480px;top:770px;width:20px;height:4px;box-sizing:border-box;background:linear-gradient(to left,#aaaaaa 0px,#aaaaaa 14.15px,#959595 14.95px,#8c8c8c 15.74px,#565656 19.40px,#565656 19.2px,#4a4a4a 20px);"></div><div style="position:absolute;left:0px;top:774px;width:20px;height:4px;box-sizing:border-box;background:linear-gradient(to right,#aaaaaa 0px,#aaaaaa 14.20px,#959595 15.00px,#8c8c8c 15.78px,#575757 19.40px,#575757 19.2px,#4b4b4b 20px);"></div><div style="position:absolute;left:1480px;top:774px;width:20px;height:4px;box-sizing:border-box;background:linear-gradient(to left,#aaaaaa 0px,#aaaaaa 14.20px,#959595 15.00px,#8c8c8c 15.78px,#575757 19.40px,#575757 19.2px,#4b4b4b 20px);"></div><div style="position:absolute;left:0px;top:778px;width:20px;height:4px;box-sizing:border-box;background:linear-gradient(to right,#aaaaaa 0px,#aaaaaa 14.25px,#959595 15.05px,#8c8c8c 15.82px,#575757 19.40px,#575757 19.2px,#4b4b4b 20px);"></div><div style="position:absolute;left:1480px;top:778px;width:20px;height:4px;box-sizing:border-box;background:linear-gradient(to left,#aaaaaa 0px,#aaaaaa 14.25px,#959595 15.05px,#8c8c8c 15.82px,#575757 19.40px,#575757 19.2px,#4b4b4b 20px);"></div><div style="position:absolute;left:0px;top:782px;width:20px;height:4px;box-sizing:border-box;background:linear-gradient(to right,#aaaaaa 0px,#aaaaaa 14.30px,#959595 15.10px,#8c8c8c 15.87px,#585858 19.40px,#585858 19.2px,#4c4c4c 20px);"></div><div style="position:absolute;left:1480px;top:782px;width:20px;height:4px;box-sizing:border-box;background:linear-gradient(to left,#aaaaaa 0px,#aaaaaa 14.30px,#959595 15.10px,#8c8c8c 15.87px,#585858 19.40px,#585858 19.2px,#4c4c4c 20px);"></div><div style="position:absolute;left:0px;top:786px;width:20px;height:4px;box-sizing:border-box;background:linear-gradient(to right,#aaaaaa 0px,#aaaaaa 14.35px,#959595 15.15px,#8c8c8c 15.91px,#585858 19.40px,#585858 19.2px,#4c4c4c 20px);"></div><div style="position:absolute;left:1480px;top:786px;width:20px;height:4px;box-sizing:border-box;background:linear-gradient(to left,#aaaaaa 0px,#aaaaaa 14.35px,#959595 15.15px,#8c8c8c 15.91px,#585858 19.40px,#585858 19.2px,#4c4c4c 20px);"></div><div style="position:absolute;left:0px;top:790px;width:20px;height:4px;box-sizing:border-box;background:linear-gradient(to right,#aaaaaa 0px,#aaaaaa 14.40px,#959595 15.20px,#8c8c8c 15.95px,#595959 19.40px,#595959 19.2px,#4d4d4d 20px);"></div><div style="position:absolute;left:1480px;top:790px;width:20px;height:4px;box-sizing:border-box;background:linear-gradient(to left,#aaaaaa 0px,#aaaaaa 14.40px,#959595 15.20px,#8c8c8c 15.95px,#595959 19.40px,#595959 19.2px,#4d4d4d 20px);"></div><div style="position:absolute;left:0px;top:794px;width:20px;height:4px;box-sizing:border-box;background:linear-gradient(to right,#aaaaaa 0px,#aaaaaa 14.45px,#959595 15.25px,#8c8c8c 15.99px,#595959 19.40px,#595959 19.2px,#4d4d4d 20px);"></div><div style="position:absolute;left:1480px;top:794px;width:20px;height:4px;box-sizing:border-box;background:linear-gradient(to left,#aaaaaa 0px,#aaaaaa 14.45px,#959595 15.25px,#8c8c8c 15.99px,#595959 19.40px,#595959 19.2px,#4d4d4d 20px);"></div><div style="position:absolute;left:0px;top:798px;width:20px;height:4px;box-sizing:border-box;background:linear-gradient(to right,#aaaaaa 0px,#aaaaaa 14.50px,#959595 15.30px,#8c8c8c 16.04px,#5a5a5a 19.40px,#5a5a5a 19.2px,#4e4e4e 20px);"></div><div style="position:absolute;left:1480px;top:798px;width:20px;height:4px;box-sizing:border-box;background:linear-gradient(to left,#aaaaaa 0px,#aaaaaa 14.50px,#959595 15.30px,#8c8c8c 16.04px,#5a5a5a 19.40px,#5a5a5a 19.2px,#4e4e4e 20px);"></div><div style="position:absolute;left:0px;top:802px;width:20px;height:4px;box-sizing:border-box;background:linear-gradient(to right,#aaaaaa 0px,#aaaaaa 14.56px,#959595 15.36px,#8c8c8c 16.08px,#5b5b5b 19.40px,#5b5b5b 19.2px,#4f4f4f 20px);"></div><div style="position:absolute;left:1480px;top:802px;width:20px;height:4px;box-sizing:border-box;background:linear-gradient(to left,#aaaaaa 0px,#aaaaaa 14.56px,#959595 15.36px,#8c8c8c 16.08px,#5b5b5b 19.40px,#5b5b5b 19.2px,#4f4f4f 20px);"></div><div style="position:absolute;left:0px;top:806px;width:20px;height:4px;box-sizing:border-box;background:linear-gradient(to right,#aaaaaa 0px,#aaaaaa 14.61px,#959595 15.41px,#8c8c8c 16.13px,#5c5c5c 19.40px,#5c5c5c 19.2px,#505050 20px);"></div><div style="position:absolute;left:1480px;top:806px;width:20px;height:4px;box-sizing:border-box;background:linear-gradient(to left,#aaaaaa 0px,#aaaaaa 14.61px,#959595 15.41px,#8c8c8c 16.13px,#5c5c5c 19.40px,#5c5c5c 19.2px,#505050 20px);"></div><div style="position:absolute;left:0px;top:810px;width:20px;height:4px;box-sizing:border-box;background:linear-gradient(to right,#aaaaaa 0px,#aaaaaa 14.67px,#959595 15.47px,#8c8c8c 16.18px,#5d5d5d 19.40px,#5d5d5d 19.2px,#515151 20px);"></div><div style="position:absolute;left:1480px;top:810px;width:20px;height:4px;box-sizing:border-box;background:linear-gradient(to left,#aaaaaa 0px,#aaaaaa 14.67px,#959595 15.47px,#8c8c8c 16.18px,#5d5d5d 19.40px,#5d5d5d 19.2px,#515151 20px);"></div><div style="position:absolute;left:0px;top:814px;width:20px;height:4px;box-sizing:border-box;background:linear-gradient(to right,#aaaaaa 0px,#aaaaaa 14.73px,#959595 15.53px,#8c8c8c 16.23px,#5f5f5f 19.40px,#5f5f5f 19.2px,#535353 20px);"></div><div style="position:absolute;left:1480px;top:814px;width:20px;height:4px;box-sizing:border-box;background:linear-gradient(to left,#aaaaaa 0px,#aaaaaa 14.73px,#959595 15.53px,#8c8c8c 16.23px,#5f5f5f 19.40px,#5f5f5f 19.2px,#535353 20px);"></div><div style="position:absolute;left:0px;top:818px;width:20px;height:4px;box-sizing:border-box;background:linear-gradient(to right,#aaaaaa 0px,#aaaaaa 14.78px,#959595 15.58px,#8c8c8c 16.27px,#606060 19.40px,#606060 19.2px,#545454 20px);"></div><div style="position:absolute;left:1480px;top:818px;width:20px;height:4px;box-sizing:border-box;background:linear-gradient(to left,#aaaaaa 0px,#aaaaaa 14.78px,#959595 15.58px,#8c8c8c 16.27px,#606060 19.40px,#606060 19.2px,#545454 20px);"></div><div style="position:absolute;left:0px;top:822px;width:20px;height:4px;box-sizing:border-box;background:linear-gradient(to right,#aaaaaa 0px,#aaaaaa 14.84px,#959595 15.64px,#8c8c8c 16.32px,#616161 19.40px,#616161 19.2px,#555555 20px);"></div><div style="position:absolute;left:1480px;top:822px;width:20px;height:4px;box-sizing:border-box;background:linear-gradient(to left,#aaaaaa 0px,#aaaaaa 14.84px,#959595 15.64px,#8c8c8c 16.32px,#616161 19.40px,#616161 19.2px,#555555 20px);"></div><div style="position:absolute;left:0px;top:826px;width:20px;height:4px;box-sizing:border-box;background:linear-gradient(to right,#aaaaaa 0px,#aaaaaa 14.89px,#959595 15.69px,#8c8c8c 16.37px,#636363 19.40px,#636363 19.2px,#575757 20px);"></div><div style="position:absolute;left:1480px;top:826px;width:20px;height:4px;box-sizing:border-box;background:linear-gradient(to left,#aaaaaa 0px,#aaaaaa 14.89px,#959595 15.69px,#8c8c8c 16.37px,#636363 19.40px,#636363 19.2px,#575757 20px);"></div><div style="position:absolute;left:0px;top:830px;width:20px;height:4px;box-sizing:border-box;background:linear-gradient(to right,#aaaaaa 0px,#aaaaaa 14.95px,#959595 15.75px,#8c8c8c 16.42px,#646464 19.40px,#646464 19.2px,#585858 20px);"></div><div style="position:absolute;left:1480px;top:830px;width:20px;height:4px;box-sizing:border-box;background:linear-gradient(to left,#aaaaaa 0px,#aaaaaa 14.95px,#959595 15.75px,#8c8c8c 16.42px,#646464 19.40px,#646464 19.2px,#585858 20px);"></div><div style="position:absolute;left:0px;top:834px;width:20px;height:4px;box-sizing:border-box;background:linear-gradient(to right,#aaaaaa 0px,#aaaaaa 15.01px,#959595 15.81px,#8c8c8c 16.47px,#656565 19.40px,#656565 19.2px,#595959 20px);"></div><div style="position:absolute;left:1480px;top:834px;width:20px;height:4px;box-sizing:border-box;background:linear-gradient(to left,#aaaaaa 0px,#aaaaaa 15.01px,#959595 15.81px,#8c8c8c 16.47px,#656565 19.40px,#656565 19.2px,#595959 20px);"></div><div style="position:absolute;left:0px;top:838px;width:20px;height:4px;box-sizing:border-box;background:linear-gradient(to right,#aaaaaa 0px,#aaaaaa 15.06px,#959595 15.86px,#8c8c8c 16.51px,#666666 19.40px,#666666 19.2px,#5a5a5a 20px);"></div><div style="position:absolute;left:1480px;top:838px;width:20px;height:4px;box-sizing:border-box;background:linear-gradient(to left,#aaaaaa 0px,#aaaaaa 15.06px,#959595 15.86px,#8c8c8c 16.51px,#666666 19.40px,#666666 19.2px,#5a5a5a 20px);"></div><div style="position:absolute;left:0px;top:842px;width:20px;height:4px;box-sizing:border-box;background:linear-gradient(to right,#aaaaaa 0px,#aaaaaa 15.12px,#959595 15.92px,#8c8c8c 16.56px,#686868 19.40px,#686868 19.2px,#5c5c5c 20px);"></div><div style="position:absolute;left:1480px;top:842px;width:20px;height:4px;box-sizing:border-box;background:linear-gradient(to left,#aaaaaa 0px,#aaaaaa 15.12px,#959595 15.92px,#8c8c8c 16.56px,#686868 19.40px,#686868 19.2px,#5c5c5c 20px);"></div><div style="position:absolute;left:0px;top:846px;width:20px;height:4px;box-sizing:border-box;background:linear-gradient(to right,#aaaaaa 0px,#aaaaaa 15.18px,#959595 15.98px,#8c8c8c 16.61px,#696969 19.40px,#696969 19.2px,#5d5d5d 20px);"></div><div style="position:absolute;left:1480px;top:846px;width:20px;height:4px;box-sizing:border-box;background:linear-gradient(to left,#aaaaaa 0px,#aaaaaa 15.18px,#959595 15.98px,#8c8c8c 16.61px,#696969 19.40px,#696969 19.2px,#5d5d5d 20px);"></div><div style="position:absolute;left:0px;top:850px;width:20px;height:4px;box-sizing:border-box;background:linear-gradient(to right,#aaaaaa 0px,#aaaaaa 15.23px,#959595 16.03px,#8c8c8c 16.66px,#6a6a6a 19.40px,#6a6a6a 19.2px,#5e5e5e 20px);"></div><div style="position:absolute;left:1480px;top:850px;width:20px;height:4px;box-sizing:border-box;background:linear-gradient(to left,#aaaaaa 0px,#aaaaaa 15.23px,#959595 16.03px,#8c8c8c 16.66px,#6a6a6a 19.40px,#6a6a6a 19.2px,#5e5e5e 20px);"></div><div style="position:absolute;left:0px;top:854px;width:20px;height:4px;box-sizing:border-box;background:linear-gradient(to right,#aaaaaa 0px,#aaaaaa 15.29px,#959595 16.09px,#8c8c8c 16.71px,#6c6c6c 19.40px,#6c6c6c 19.2px,#606060 20px);"></div><div style="position:absolute;left:1480px;top:854px;width:20px;height:4px;box-sizing:border-box;background:linear-gradient(to left,#aaaaaa 0px,#aaaaaa 15.29px,#959595 16.09px,#8c8c8c 16.71px,#6c6c6c 19.40px,#6c6c6c 19.2px,#606060 20px);"></div><div style="position:absolute;left:0px;top:858px;width:20px;height:4px;box-sizing:border-box;background:linear-gradient(to right,#aaaaaa 0px,#aaaaaa 15.35px,#959595 16.15px,#8c8c8c 16.75px,#6d6d6d 19.40px,#6d6d6d 19.2px,#616161 20px);"></div><div style="position:absolute;left:1480px;top:858px;width:20px;height:4px;box-sizing:border-box;background:linear-gradient(to left,#aaaaaa 0px,#aaaaaa 15.35px,#959595 16.15px,#8c8c8c 16.75px,#6d6d6d 19.40px,#6d6d6d 19.2px,#616161 20px);"></div><div style="position:absolute;left:0px;top:862px;width:20px;height:4px;box-sizing:border-box;background:linear-gradient(to right,#aaaaaa 0px,#aaaaaa 15.40px,#959595 16.20px,#8c8c8c 16.80px,#6e6e6e 19.40px,#6e6e6e 19.2px,#626262 20px);"></div><div style="position:absolute;left:1480px;top:862px;width:20px;height:4px;box-sizing:border-box;background:linear-gradient(to left,#aaaaaa 0px,#aaaaaa 15.40px,#959595 16.20px,#8c8c8c 16.80px,#6e6e6e 19.40px,#6e6e6e 19.2px,#626262 20px);"></div><div style="position:absolute;left:0px;top:866px;width:20px;height:4px;box-sizing:border-box;background:linear-gradient(to right,#aaaaaa 0px,#aaaaaa 15.46px,#959595 16.26px,#8c8c8c 16.85px,#707070 19.40px,#707070 19.2px,#646464 20px);"></div><div style="position:absolute;left:1480px;top:866px;width:20px;height:4px;box-sizing:border-box;background:linear-gradient(to left,#aaaaaa 0px,#aaaaaa 15.46px,#959595 16.26px,#8c8c8c 16.85px,#707070 19.40px,#707070 19.2px,#646464 20px);"></div><div style="position:absolute;left:0px;top:870px;width:20px;height:4px;box-sizing:border-box;background:linear-gradient(to right,#aaaaaa 0px,#aaaaaa 15.51px,#959595 16.31px,#8c8c8c 16.90px,#717171 19.40px,#717171 19.2px,#656565 20px);"></div><div style="position:absolute;left:1480px;top:870px;width:20px;height:4px;box-sizing:border-box;background:linear-gradient(to left,#aaaaaa 0px,#aaaaaa 15.51px,#959595 16.31px,#8c8c8c 16.90px,#717171 19.40px,#717171 19.2px,#656565 20px);"></div><div style="position:absolute;left:0px;top:874px;width:20px;height:4px;box-sizing:border-box;background:linear-gradient(to right,#aaaaaa 0px,#aaaaaa 15.57px,#959595 16.37px,#8c8c8c 16.94px,#727272 19.40px,#727272 19.2px,#666666 20px);"></div><div style="position:absolute;left:1480px;top:874px;width:20px;height:4px;box-sizing:border-box;background:linear-gradient(to left,#aaaaaa 0px,#aaaaaa 15.57px,#959595 16.37px,#8c8c8c 16.94px,#727272 19.40px,#727272 19.2px,#666666 20px);"></div><div style="position:absolute;left:0px;top:878px;width:20px;height:4px;box-sizing:border-box;background:linear-gradient(to right,#aaaaaa 0px,#aaaaaa 15.63px,#959595 16.43px,#8c8c8c 16.99px,#737373 19.40px,#737373 19.2px,#676767 20px);"></div><div style="position:absolute;left:1480px;top:878px;width:20px;height:4px;box-sizing:border-box;background:linear-gradient(to left,#aaaaaa 0px,#aaaaaa 15.63px,#959595 16.43px,#8c8c8c 16.99px,#737373 19.40px,#737373 19.2px,#676767 20px);"></div><div style="position:absolute;left:0px;top:882px;width:20px;height:4px;box-sizing:border-box;background:linear-gradient(to right,#aaaaaa 0px,#aaaaaa 15.68px,#959595 16.48px,#8c8c8c 17.04px,#757575 19.40px,#757575 19.2px,#696969 20px);"></div><div style="position:absolute;left:1480px;top:882px;width:20px;height:4px;box-sizing:border-box;background:linear-gradient(to left,#aaaaaa 0px,#aaaaaa 15.68px,#959595 16.48px,#8c8c8c 17.04px,#757575 19.40px,#757575 19.2px,#696969 20px);"></div><div style="position:absolute;left:0px;top:886px;width:20px;height:4px;box-sizing:border-box;background:linear-gradient(to right,#aaaaaa 0px,#aaaaaa 15.74px,#959595 16.54px,#8c8c8c 17.09px,#767676 19.40px,#767676 19.2px,#6a6a6a 20px);"></div><div style="position:absolute;left:1480px;top:886px;width:20px;height:4px;box-sizing:border-box;background:linear-gradient(to left,#aaaaaa 0px,#aaaaaa 15.74px,#959595 16.54px,#8c8c8c 17.09px,#767676 19.40px,#767676 19.2px,#6a6a6a 20px);"></div><div style="position:absolute;left:0px;top:890px;width:20px;height:4px;box-sizing:border-box;background:linear-gradient(to right,#aaaaaa 0px,#aaaaaa 15.80px,#959595 16.60px,#8c8c8c 17.14px,#777777 19.40px,#777777 19.2px,#6b6b6b 20px);"></div><div style="position:absolute;left:1480px;top:890px;width:20px;height:4px;box-sizing:border-box;background:linear-gradient(to left,#aaaaaa 0px,#aaaaaa 15.80px,#959595 16.60px,#8c8c8c 17.14px,#777777 19.40px,#777777 19.2px,#6b6b6b 20px);"></div><div style="position:absolute;left:0px;top:894px;width:20px;height:4px;box-sizing:border-box;background:linear-gradient(to right,#aaaaaa 0px,#aaaaaa 15.85px,#959595 16.65px,#8c8c8c 17.18px,#797979 19.40px,#797979 19.2px,#6d6d6d 20px);"></div><div style="position:absolute;left:1480px;top:894px;width:20px;height:4px;box-sizing:border-box;background:linear-gradient(to left,#aaaaaa 0px,#aaaaaa 15.85px,#959595 16.65px,#8c8c8c 17.18px,#797979 19.40px,#797979 19.2px,#6d6d6d 20px);"></div><div style="position:absolute;left:0px;top:898px;width:20px;height:4px;box-sizing:border-box;background:linear-gradient(to right,#aaaaaa 0px,#aaaaaa 15.91px,#959595 16.71px,#8c8c8c 17.23px,#7a7a7a 19.40px,#7a7a7a 19.2px,#6e6e6e 20px);"></div><div style="position:absolute;left:1480px;top:898px;width:20px;height:4px;box-sizing:border-box;background:linear-gradient(to left,#aaaaaa 0px,#aaaaaa 15.91px,#959595 16.71px,#8c8c8c 17.23px,#7a7a7a 19.40px,#7a7a7a 19.2px,#6e6e6e 20px);"></div><div style="position:absolute;left:0px;top:902px;width:20px;height:4px;box-sizing:border-box;background:linear-gradient(to right,#aaaaaa 0px,#aaaaaa 15.96px,#959595 16.76px,#8c8c8c 17.28px,#7b7b7b 19.40px,#7b7b7b 19.2px,#6f6f6f 20px);"></div><div style="position:absolute;left:1480px;top:902px;width:20px;height:4px;box-sizing:border-box;background:linear-gradient(to left,#aaaaaa 0px,#aaaaaa 15.96px,#959595 16.76px,#8c8c8c 17.28px,#7b7b7b 19.40px,#7b7b7b 19.2px,#6f6f6f 20px);"></div><div style="position:absolute;left:0px;top:906px;width:20px;height:4px;box-sizing:border-box;background:linear-gradient(to right,#aaaaaa 0px,#aaaaaa 16.02px,#959595 16.82px,#8c8c8c 17.33px,#7c7c7c 19.40px,#7c7c7c 19.2px,#707070 20px);"></div><div style="position:absolute;left:1480px;top:906px;width:20px;height:4px;box-sizing:border-box;background:linear-gradient(to left,#aaaaaa 0px,#aaaaaa 16.02px,#959595 16.82px,#8c8c8c 17.33px,#7c7c7c 19.40px,#7c7c7c 19.2px,#707070 20px);"></div><div style="position:absolute;left:0px;top:910px;width:20px;height:4px;box-sizing:border-box;background:linear-gradient(to right,#aaaaaa 0px,#aaaaaa 16.08px,#959595 16.88px,#8c8c8c 17.38px,#7e7e7e 19.40px,#7e7e7e 19.2px,#727272 20px);"></div><div style="position:absolute;left:1480px;top:910px;width:20px;height:4px;box-sizing:border-box;background:linear-gradient(to left,#aaaaaa 0px,#aaaaaa 16.08px,#959595 16.88px,#8c8c8c 17.38px,#7e7e7e 19.40px,#7e7e7e 19.2px,#727272 20px);"></div><div style="position:absolute;left:0px;top:914px;width:20px;height:4px;box-sizing:border-box;background:linear-gradient(to right,#aaaaaa 0px,#aaaaaa 16.13px,#959595 16.93px,#8c8c8c 17.42px,#7f7f7f 19.40px,#7f7f7f 19.2px,#737373 20px);"></div><div style="position:absolute;left:1480px;top:914px;width:20px;height:4px;box-sizing:border-box;background:linear-gradient(to left,#aaaaaa 0px,#aaaaaa 16.13px,#959595 16.93px,#8c8c8c 17.42px,#7f7f7f 19.40px,#7f7f7f 19.2px,#737373 20px);"></div><div style="position:absolute;left:0px;top:918px;width:20px;height:4px;box-sizing:border-box;background:linear-gradient(to right,#aaaaaa 0px,#aaaaaa 16.19px,#959595 16.99px,#8c8c8c 17.47px,#808080 19.40px,#808080 19.2px,#747474 20px);"></div><div style="position:absolute;left:1480px;top:918px;width:20px;height:4px;box-sizing:border-box;background:linear-gradient(to left,#aaaaaa 0px,#aaaaaa 16.19px,#959595 16.99px,#8c8c8c 17.47px,#808080 19.40px,#808080 19.2px,#747474 20px);"></div><div style="position:absolute;left:0px;top:922px;width:20px;height:4px;box-sizing:border-box;background:linear-gradient(to right,#aaaaaa 0px,#aaaaaa 16.25px,#959595 17.05px,#8c8c8c 17.52px,#828282 19.40px,#828282 19.2px,#767676 20px);"></div><div style="position:absolute;left:1480px;top:922px;width:20px;height:4px;box-sizing:border-box;background:linear-gradient(to left,#aaaaaa 0px,#aaaaaa 16.25px,#959595 17.05px,#8c8c8c 17.52px,#828282 19.40px,#828282 19.2px,#767676 20px);"></div><div style="position:absolute;left:0px;top:926px;width:20px;height:4px;box-sizing:border-box;background:linear-gradient(to right,#aaaaaa 0px,#aaaaaa 16.30px,#959595 17.10px,#8c8c8c 17.57px,#838383 19.40px,#838383 19.2px,#777777 20px);"></div><div style="position:absolute;left:1480px;top:926px;width:20px;height:4px;box-sizing:border-box;background:linear-gradient(to left,#aaaaaa 0px,#aaaaaa 16.30px,#959595 17.10px,#8c8c8c 17.57px,#838383 19.40px,#838383 19.2px,#777777 20px);"></div><div style="position:absolute;left:0px;top:930px;width:20px;height:4px;box-sizing:border-box;background:linear-gradient(to right,#aaaaaa 0px,#aaaaaa 16.36px,#959595 17.16px,#8c8c8c 17.62px,#848484 19.40px,#848484 19.2px,#787878 20px);"></div><div style="position:absolute;left:1480px;top:930px;width:20px;height:4px;box-sizing:border-box;background:linear-gradient(to left,#aaaaaa 0px,#aaaaaa 16.36px,#959595 17.16px,#8c8c8c 17.62px,#848484 19.40px,#848484 19.2px,#787878 20px);"></div><div style="position:absolute;left:0px;top:934px;width:20px;height:4px;box-sizing:border-box;background:linear-gradient(to right,#aaaaaa 0px,#aaaaaa 16.42px,#959595 17.22px,#8c8c8c 17.66px,#868686 19.40px,#868686 19.2px,#7a7a7a 20px);"></div><div style="position:absolute;left:1480px;top:934px;width:20px;height:4px;box-sizing:border-box;background:linear-gradient(to left,#aaaaaa 0px,#aaaaaa 16.42px,#959595 17.22px,#8c8c8c 17.66px,#868686 19.40px,#868686 19.2px,#7a7a7a 20px);"></div><div style="position:absolute;left:0px;top:938px;width:20px;height:4px;box-sizing:border-box;background:linear-gradient(to right,#aaaaaa 0px,#aaaaaa 16.47px,#959595 17.27px,#8c8c8c 17.71px,#878787 19.40px,#878787 19.2px,#7b7b7b 20px);"></div><div style="position:absolute;left:1480px;top:938px;width:20px;height:4px;box-sizing:border-box;background:linear-gradient(to left,#aaaaaa 0px,#aaaaaa 16.47px,#959595 17.27px,#8c8c8c 17.71px,#878787 19.40px,#878787 19.2px,#7b7b7b 20px);"></div><div style="position:absolute;left:0px;top:930px;width:18px;height:12px;box-sizing:border-box;background:#a4a4a4;"></div><div style="position:absolute;left:1482px;top:930px;width:18px;height:12px;box-sizing:border-box;background:#a4a4a4;"></div><div style="position:absolute;left:0;top:0;width:20px;height:10px;background:radial-gradient(20px 10px at 20px 10px,#3c3c3c 0%,#4a4a4a 30%,#6e6e6e 60%,#8e8e8e 85%,#a8a8a8 100%);"></div><div style="position:absolute;left:1480px;top:0;width:20px;height:10px;background:radial-gradient(20px 10px at 0px 10px,#3c3c3c 0%,#4a4a4a 30%,#6e6e6e 60%,#8e8e8e 85%,#a8a8a8 100%);"></div><svg style="position:absolute;left:0;top:0" width="16" height="16"><path d="M0,0 H13 A13,13 0 0 0 0,13 Z" fill="#050505"/></svg><svg style="position:absolute;left:1484px;top:0" width="16" height="16"><path d="M16,0 H3 A13,13 0 0 1 16,13 Z" fill="#050505"/></svg><div style="position:absolute;left:20px;top:10px;width:6px;height:6px;box-sizing:border-box;background:#e9eef2;border-top-left-radius:2px;border-top:1px solid #f4f8fb;border-left:1px solid #f4f8fb;"></div><div style="position:absolute;left:1474px;top:10px;width:6px;height:6px;box-sizing:border-box;background:#e9eef2;border-top-right-radius:2px;border-top:1px solid #f4f8fb;border-right:1px solid #f4f8fb;"></div><div style="position:absolute;left:30px;top:23px;width:75px;height:64px;box-sizing:border-box;background:#fff;border:1px solid #cbdde4;border-right:none;border-radius:3px 0 0 3px;"></div><div style="position:absolute;left:104px;top:23px;width:1366px;height:64px;box-sizing:border-box;background:#4e4e4e;border:1px solid #434343;border-left:1px solid #3d3d3d;border-radius:0 3px 3px 0;"></div><div class="t" style="left:120px;top:42.13px;font-size:24.3px;line-height:24.3px;color:#fff;font-weight:700;letter-spacing:-0.2px;-webkit-text-stroke:0.5px #fff;">Survey Overview</div><svg style="position:absolute;left:40px;top:30px" width="60" height="50" viewBox="40 30 60 50">
<defs><linearGradient id="bz" x1="0" y1="0" x2="0" y2="1"><stop offset="0" stop-color="#74787c"/><stop offset="0.2" stop-color="#45484b"/><stop offset="1" stop-color="#1e1f20"/></linearGradient>
<linearGradient id="scr" x1="0" y1="0" x2="0" y2="1"><stop offset="0" stop-color="#d6d9db"/><stop offset="1" stop-color="#f6f7f7"/></linearGradient></defs>
<polygon points="49,38.6 82.2,38.6 88.4,65.6 55.4,72.1" fill="url(#bz)" stroke="url(#bz)" stroke-width="1.2" stroke-linejoin="round"/>
<polygon points="52.6,42.1 81,41.8 85.7,63.4 57.3,68.9" fill="url(#scr)"/>
<rect x="60" y="46.2" width="14.5" height="2.6" rx="1.3" fill="#d2d5d8"/>
<rect x="71" y="51" width="3" height="2.4" fill="#d2d5d8"/>
<rect x="67" y="55.6" width="8" height="2.6" fill="#d2d5d8"/>
<rect x="60" y="60.6" width="16" height="2.8" fill="#d2d5d8"/>
<path d="M75.5,51.8 l0.8,1 l1.6,-2" stroke="#b9bdc0" stroke-width="0.6" fill="none"/>
<rect x="76.3" y="55.4" width="2" height="2" fill="none" stroke="#c4c8ca" stroke-width="0.5"/>
<rect x="77.3" y="60.2" width="2.2" height="2.2" fill="none" stroke="#c4c8ca" stroke-width="0.5"/>
<rect x="53.3" y="45.8" width="7.8" height="3.3" rx="1.6" fill="#ff1a00"/>
<polygon points="54,50.6 71,50 72,51.8 71,53.2 54.5,53.8" fill="#00e000"/>
<polygon points="55,55.2 67,54.8 67.4,56.6 67,58.2 55.5,58.8" fill="#0a84ff"/>
<rect x="56" y="60.2" width="5.3" height="3.6" rx="1.2" fill="#ffd900"/>
</svg><div style="position:absolute;left:31px;top:103px;width:200px;height:152px;box-sizing:border-box;background:#fff;border:1px solid #cbdde4;border-radius:3px;"></div><div style="position:absolute;left:241px;top:103px;width:198px;height:153px;box-sizing:border-box;background:#fff;border:1px solid #cbdde4;border-radius:3px;"></div><div style="position:absolute;left:449px;top:103px;width:196px;height:153px;box-sizing:border-box;background:#fff;border:1px solid #cbdde4;border-radius:3px;"></div><div style="position:absolute;left:656px;top:103px;width:201px;height:154px;box-sizing:border-box;background:#fff;border:1px solid #cbdde4;border-radius:3px;"></div><div style="position:absolute;left:867px;top:103px;width:237px;height:154px;box-sizing:border-box;background:#fff;border:1px solid #cbdde4;border-radius:3px;"></div><div style="position:absolute;left:1114px;top:103px;width:354px;height:156px;box-sizing:border-box;background:#fff;border:1px solid #cbdde4;border-radius:3px;"></div><div class="t" style="left:-368.5px;width:1000px;text-align:center;top:138.22px;font-size:21px;line-height:21px;color:#434343;font-weight:700;letter-spacing:-0.5px;">Surveys</div><div class="t" style="left:-365.0px;width:1000px;text-align:center;top:173.60px;font-size:38.5px;line-height:38.5px;color:#000;font-weight:400;letter-spacing:2px;-webkit-text-stroke:0.5px #000;">12</div><div class="t" style="left:-162.0px;width:1000px;text-align:center;top:140.02px;font-size:21px;line-height:21px;color:#434343;font-weight:700;letter-spacing:-0.45px;">Collectors</div><div class="t" style="left:-157.5px;width:1000px;text-align:center;top:175.18px;font-size:39px;line-height:39px;color:#000;font-weight:400;letter-spacing:3px;-webkit-text-stroke:0.5px #000;">23</div><div class="t" style="left:44.5px;width:1000px;text-align:center;top:140.02px;font-size:21px;line-height:21px;color:#434343;font-weight:700;letter-spacing:-0.45px;">Responses</div><div class="t" style="left:47.200000000000045px;width:1000px;text-align:center;top:175.60px;font-size:38.5px;line-height:38.5px;color:#000;font-weight:400;letter-spacing:1.2px;-webkit-text-stroke:0.5px #000;">0.87K</div><div class="t" style="left:257.0px;width:1000px;text-align:center;top:138.52px;font-size:21px;line-height:21px;color:#434343;font-weight:700;letter-spacing:-0.45px;">Partial Responses</div><div class="t" style="left:254.0px;width:1000px;text-align:center;top:175.20px;font-size:38.5px;line-height:38.5px;color:#000;font-weight:400;letter-spacing:4px;-webkit-text-stroke:0.5px #000;">113</div><div class="t" style="left:485.0px;width:1000px;text-align:center;top:140.02px;font-size:21px;line-height:21px;color:#434343;font-weight:700;letter-spacing:-0.1px;">Avg Time Taken <span style="font-size:17.5px;font-weight:400;letter-spacing:0;-webkit-text-stroke:0.2px #444">(mins)</span></div><div class="t" style="left:484.20000000000005px;width:1000px;text-align:center;top:174.60px;font-size:38.5px;line-height:38.5px;color:#000;font-weight:400;letter-spacing:1.5px;-webkit-text-stroke:0.5px #000;">5.04</div><div class="t" style="left:794.0px;width:1000px;text-align:center;top:140.42px;font-size:21px;line-height:21px;color:#434343;font-weight:700;letter-spacing:-0.2px;">Survey Completion Rate</div><div style="position:absolute;left:1124px;top:175.4px;width:83.5px;height:35.6px;box-sizing:border-box;background:#cdcdcd;"></div><div style="position:absolute;left:1207.5px;top:175.4px;width:83.5px;height:35.6px;box-sizing:border-box;background:#dadada;"></div><div style="position:absolute;left:1291px;top:175.4px;width:167px;height:35.6px;box-sizing:border-box;background:#e6e6e6;"></div><div style="position:absolute;left:1124px;top:181.5px;width:292.6px;height:23.8px;box-sizing:border-box;background:#fbb30d;"></div><div class="t" style="left:1371.5px;top:186.92px;font-size:12.5px;line-height:12.5px;color:#000;font-weight:400;letter-spacing:0.2px;-webkit-text-stroke:0.15px #000;">87.56%</div><div style="position:absolute;left:1373px;top:178.3px;width:3px;height:30.2px;box-sizing:border-box;background:#58595b;"></div><div style="position:absolute;left:31px;top:273px;width:869px;height:703px;box-sizing:border-box;background:#fff;border:1px solid #cbdde4;border-radius:3px;"></div><div style="position:absolute;left:32px;top:330px;width:867px;height:1px;box-sizing:border-box;background:#e5edf1;"></div><div style="position:absolute;left:910px;top:273px;width:560px;height:703px;box-sizing:border-box;background:#fff;border:1px solid #cbdde4;border-radius:3px;"></div><div style="position:absolute;left:911px;top:330px;width:558px;height:1px;box-sizing:border-box;background:#e5edf1;"></div><div class="t" style="left:43.7px;top:289.72px;font-size:21px;line-height:21px;color:#3d3d3d;font-weight:700;letter-spacing:-0.4px;">Survey Summary</div><div class="t" style="left:922.7px;top:290.22px;font-size:21px;line-height:21px;color:#3d3d3d;font-weight:700;letter-spacing:-0.25px;">Surveys by Category</div><div style="position:absolute;left:39px;top:386px;width:266px;height:533px;box-sizing:border-box;background:#f9ecd8;"></div><div style="position:absolute;left:305px;top:386px;width:135px;height:533px;box-sizing:border-box;background:#f9ecd8;"></div><div style="position:absolute;left:39px;top:343px;width:853px;height:44px;box-sizing:border-box;background:#f2d7a2;"></div><div style="position:absolute;left:39px;top:343px;width:853px;height:577px;box-sizing:border-box;border:1px solid #ecc37a;"></div><div style="position:absolute;left:39px;top:386px;width:853px;height:1px;box-sizing:border-box;background:#ecc37a;"></div><div style="position:absolute;left:305px;top:343px;width:1px;height:577px;box-sizing:border-box;background:#ecc37a;"></div><div style="position:absolute;left:440px;top:343px;width:1px;height:577px;box-sizing:border-box;background:#ecc37a;"></div><div style="position:absolute;left:503px;top:343px;width:1px;height:577px;box-sizing:border-box;background:#ecc37a;"></div><div style="position:absolute;left:603px;top:343px;width:1px;height:577px;box-sizing:border-box;background:#ecc37a;"></div><div style="position:absolute;left:724px;top:343px;width:1px;height:577px;box-sizing:border-box;background:#ecc37a;"></div><div style="position:absolute;left:40px;top:427px;width:851px;height:1px;background:repeating-linear-gradient(to right,#ecc37a 0px,#ecc37a 1px,transparent 1px,transparent 2px);"></div><div style="position:absolute;left:40px;top:468px;width:851px;height:1px;background:repeating-linear-gradient(to right,#ecc37a 0px,#ecc37a 1px,transparent 1px,transparent 2px);"></div><div style="position:absolute;left:40px;top:509px;width:851px;height:1px;background:repeating-linear-gradient(to right,#ecc37a 0px,#ecc37a 1px,transparent 1px,transparent 2px);"></div><div style="position:absolute;left:40px;top:550px;width:851px;height:1px;background:repeating-linear-gradient(to right,#ecc37a 0px,#ecc37a 1px,transparent 1px,transparent 2px);"></div><div style="position:absolute;left:40px;top:591px;width:851px;height:1px;background:repeating-linear-gradient(to right,#ecc37a 0px,#ecc37a 1px,transparent 1px,transparent 2px);"></div><div style="position:absolute;left:40px;top:632px;width:851px;height:1px;background:repeating-linear-gradient(to right,#ecc37a 0px,#ecc37a 1px,transparent 1px,transparent 2px);"></div><div style="position:absolute;left:40px;top:673px;width:851px;height:1px;background:repeating-linear-gradient(to right,#ecc37a 0px,#ecc37a 1px,transparent 1px,transparent 2px);"></div><div style="position:absolute;left:40px;top:714px;width:851px;height:1px;background:repeating-linear-gradient(to right,#ecc37a 0px,#ecc37a 1px,transparent 1px,transparent 2px);"></div><div style="position:absolute;left:40px;top:755px;width:851px;height:1px;background:repeating-linear-gradient(to right,#ecc37a 0px,#ecc37a 1px,transparent 1px,transparent 2px);"></div><div style="position:absolute;left:40px;top:796px;width:851px;height:1px;background:repeating-linear-gradient(to right,#ecc37a 0px,#ecc37a 1px,transparent 1px,transparent 2px);"></div><div style="position:absolute;left:40px;top:837px;width:851px;height:1px;background:repeating-linear-gradient(to right,#ecc37a 0px,#ecc37a 1px,transparent 1px,transparent 2px);"></div><div style="position:absolute;left:40px;top:878px;width:851px;height:1px;background:repeating-linear-gradient(to right,#ecc37a 0px,#ecc37a 1px,transparent 1px,transparent 2px);"></div><div class="t" style="left:-319.7px;width:1000px;text-align:center;top:357.15px;font-size:16px;line-height:16px;color:#7d5510;font-weight:700;letter-spacing:0px;-webkit-text-stroke:0.3px #7d5510;">Surveys</div><div class="t" style="left:-127.69999999999999px;width:1000px;text-align:center;top:358.15px;font-size:16px;line-height:16px;color:#7d5510;font-weight:700;letter-spacing:0px;-webkit-text-stroke:0.3px #7d5510;">Created Date</div><div class="t" style="left:-29.30000000000001px;width:1000px;text-align:center;top:358.15px;font-size:16px;line-height:16px;color:#7d5510;font-weight:700;letter-spacing:0px;-webkit-text-stroke:0.3px #7d5510;">Pages</div><div class="t" style="left:53.0px;width:1000px;text-align:center;top:358.15px;font-size:16px;line-height:16px;color:#7d5510;font-weight:700;letter-spacing:0px;-webkit-text-stroke:0.3px #7d5510;">Questions</div><div class="t" style="left:162.89999999999998px;width:1000px;text-align:center;top:358.15px;font-size:16px;line-height:16px;color:#7d5510;font-weight:700;letter-spacing:0px;-webkit-text-stroke:0.3px #7d5510;">Respondents</div><div class="t" style="left:308.4px;width:1000px;text-align:center;top:358.15px;font-size:16px;line-height:16px;color:#7d5510;font-weight:700;letter-spacing:0px;-webkit-text-stroke:0.3px #7d5510;">Completion Rate</div><div style="position:absolute;left:781px;top:379px;width:3px;height:1px;box-sizing:border-box;background:#9a7a40;"></div><div class="t" style="left:47px;top:398.03px;font-size:16.5px;line-height:16.5px;color:#7a5514;font-weight:400;letter-spacing:0px;-webkit-text-stroke:0.2px currentColor;">Customer Demographics Survey</div><div class="t" style="left:313.5px;top:398.03px;font-size:16.5px;line-height:16.5px;color:#7a5514;font-weight:400;letter-spacing:0.75px;-webkit-text-stroke:0.2px currentColor;">2017-06-14</div><div class="t" style="right:1005.8px;top:398.03px;font-size:16.5px;line-height:16.5px;color:#7a5514;font-weight:400;letter-spacing:0px;-webkit-text-stroke:0.2px currentColor;">1</div><div class="t" style="right:904.5px;top:398.03px;font-size:16.5px;line-height:16.5px;color:#7a5514;font-weight:400;letter-spacing:0px;-webkit-text-stroke:0.2px currentColor;">10</div><div class="t" style="right:784px;top:398.03px;font-size:16.5px;line-height:16.5px;color:#7a5514;font-weight:400;letter-spacing:0px;-webkit-text-stroke:0.2px currentColor;">1</div><div class="t" style="right:616px;top:398.03px;font-size:16.5px;line-height:16.5px;color:#2ebd87;font-weight:400;letter-spacing:0px;-webkit-text-stroke:0.2px currentColor;">100%</div><div style="position:absolute;left:733px;top:401px;width:9px;height:9px;border-radius:50%;background:#33c08a;"></div><div class="t" style="left:47px;top:439.03px;font-size:16.5px;line-height:16.5px;color:#7a5514;font-weight:400;letter-spacing:0px;-webkit-text-stroke:0.2px currentColor;">Customer Satisfaction Survey</div><div class="t" style="left:313.5px;top:439.03px;font-size:16.5px;line-height:16.5px;color:#7a5514;font-weight:400;letter-spacing:0.75px;-webkit-text-stroke:0.2px currentColor;">2016-12-20</div><div class="t" style="right:1005.8px;top:439.03px;font-size:16.5px;line-height:16.5px;color:#7a5514;font-weight:400;letter-spacing:0px;-webkit-text-stroke:0.2px currentColor;">1</div><div class="t" style="right:904.5px;top:439.03px;font-size:16.5px;line-height:16.5px;color:#7a5514;font-weight:400;letter-spacing:0px;-webkit-text-stroke:0.2px currentColor;">10</div><div class="t" style="right:784px;top:439.03px;font-size:16.5px;line-height:16.5px;color:#7a5514;font-weight:400;letter-spacing:0px;-webkit-text-stroke:0.2px currentColor;">5</div><div class="t" style="right:616px;top:439.03px;font-size:16.5px;line-height:16.5px;color:#e5364f;font-weight:400;letter-spacing:0px;-webkit-text-stroke:0.2px currentColor;">60%</div><div style="position:absolute;left:733px;top:442px;width:9px;height:9px;border-radius:50%;background:#e6374f;"></div><div class="t" style="left:47px;top:480.03px;font-size:16.5px;line-height:16.5px;color:#7a5514;font-weight:400;letter-spacing:0px;-webkit-text-stroke:0.2px currentColor;">Customer Satisfaction Survey-II</div><div class="t" style="left:313.5px;top:480.03px;font-size:16.5px;line-height:16.5px;color:#7a5514;font-weight:400;letter-spacing:0.75px;-webkit-text-stroke:0.2px currentColor;">2017-10-30</div><div class="t" style="right:1005.8px;top:480.03px;font-size:16.5px;line-height:16.5px;color:#7a5514;font-weight:400;letter-spacing:0px;-webkit-text-stroke:0.2px currentColor;">4</div><div class="t" style="right:904.5px;top:480.03px;font-size:16.5px;line-height:16.5px;color:#7a5514;font-weight:400;letter-spacing:0px;-webkit-text-stroke:0.2px currentColor;">14</div><div class="t" style="right:784px;top:480.03px;font-size:16.5px;line-height:16.5px;color:#7a5514;font-weight:400;letter-spacing:0px;-webkit-text-stroke:0.2px currentColor;">100</div><div class="t" style="right:616px;top:480.03px;font-size:16.5px;line-height:16.5px;color:#f0a032;font-weight:400;letter-spacing:0px;-webkit-text-stroke:0.2px currentColor;">89%</div><div style="position:absolute;left:733px;top:483px;width:9px;height:9px;border-radius:50%;background:#f2a431;"></div><div class="t" style="left:47px;top:521.03px;font-size:16.5px;line-height:16.5px;color:#7a5514;font-weight:400;letter-spacing:0px;-webkit-text-stroke:0.2px currentColor;">Employee Engagement Survey</div><div class="t" style="left:313.5px;top:521.03px;font-size:16.5px;line-height:16.5px;color:#7a5514;font-weight:400;letter-spacing:0.75px;-webkit-text-stroke:0.2px currentColor;">2017-07-06</div><div class="t" style="right:1005.8px;top:521.03px;font-size:16.5px;line-height:16.5px;color:#7a5514;font-weight:400;letter-spacing:0px;-webkit-text-stroke:0.2px currentColor;">7</div><div class="t" style="right:904.5px;top:521.03px;font-size:16.5px;line-height:16.5px;color:#7a5514;font-weight:400;letter-spacing:0px;-webkit-text-stroke:0.2px currentColor;">42</div><div class="t" style="right:784px;top:521.03px;font-size:16.5px;line-height:16.5px;color:#7a5514;font-weight:400;letter-spacing:0px;-webkit-text-stroke:0.2px currentColor;">1</div><div class="t" style="right:616px;top:521.03px;font-size:16.5px;line-height:16.5px;color:#e5364f;font-weight:400;letter-spacing:0px;-webkit-text-stroke:0.2px currentColor;">0%</div><div style="position:absolute;left:733px;top:524px;width:9px;height:9px;border-radius:50%;background:#e6374f;"></div><div class="t" style="left:47px;top:562.03px;font-size:16.5px;line-height:16.5px;color:#7a5514;font-weight:400;letter-spacing:0px;-webkit-text-stroke:0.2px currentColor;">Employee Evaluation Feedback</div><div class="t" style="left:313.5px;top:562.03px;font-size:16.5px;line-height:16.5px;color:#7a5514;font-weight:400;letter-spacing:0.75px;-webkit-text-stroke:0.2px currentColor;">2017-10-30</div><div class="t" style="right:1005.8px;top:562.03px;font-size:16.5px;line-height:16.5px;color:#7a5514;font-weight:400;letter-spacing:0px;-webkit-text-stroke:0.2px currentColor;">5</div><div class="t" style="right:904.5px;top:562.03px;font-size:16.5px;line-height:16.5px;color:#7a5514;font-weight:400;letter-spacing:0px;-webkit-text-stroke:0.2px currentColor;">10</div><div class="t" style="right:784px;top:562.03px;font-size:16.5px;line-height:16.5px;color:#7a5514;font-weight:400;letter-spacing:0px;-webkit-text-stroke:0.2px currentColor;">100</div><div class="t" style="right:616px;top:562.03px;font-size:16.5px;line-height:16.5px;color:#2ebd87;font-weight:400;letter-spacing:0px;-webkit-text-stroke:0.2px currentColor;">95%</div><div style="position:absolute;left:733px;top:565px;width:9px;height:9px;border-radius:50%;background:#33c08a;"></div><div class="t" style="left:47px;top:603.03px;font-size:16.5px;line-height:16.5px;color:#7a5514;font-weight:400;letter-spacing:0px;-webkit-text-stroke:0.2px currentColor;">Employee Performance Evaluation</div><div class="t" style="left:313.5px;top:603.03px;font-size:16.5px;line-height:16.5px;color:#7a5514;font-weight:400;letter-spacing:0.75px;-webkit-text-stroke:0.2px currentColor;">2017-10-30</div><div class="t" style="right:1005.8px;top:603.03px;font-size:16.5px;line-height:16.5px;color:#7a5514;font-weight:400;letter-spacing:0px;-webkit-text-stroke:0.2px currentColor;">4</div><div class="t" style="right:904.5px;top:603.03px;font-size:16.5px;line-height:16.5px;color:#7a5514;font-weight:400;letter-spacing:0px;-webkit-text-stroke:0.2px currentColor;">17</div><div class="t" style="right:784px;top:603.03px;font-size:16.5px;line-height:16.5px;color:#7a5514;font-weight:400;letter-spacing:0px;-webkit-text-stroke:0.2px currentColor;">200</div><div class="t" style="right:616px;top:603.03px;font-size:16.5px;line-height:16.5px;color:#f0a032;font-weight:400;letter-spacing:0px;-webkit-text-stroke:0.2px currentColor;">89.5%</div><div style="position:absolute;left:733px;top:606px;width:9px;height:9px;border-radius:50%;background:#f2a431;"></div><div class="t" style="left:47px;top:644.03px;font-size:16.5px;line-height:16.5px;color:#7a5514;font-weight:400;letter-spacing:0px;-webkit-text-stroke:0.2px currentColor;">Event Planning Survey</div><div class="t" style="left:313.5px;top:644.03px;font-size:16.5px;line-height:16.5px;color:#7a5514;font-weight:400;letter-spacing:0.75px;-webkit-text-stroke:0.2px currentColor;">2017-08-08</div><div class="t" style="right:1005.8px;top:644.03px;font-size:16.5px;line-height:16.5px;color:#7a5514;font-weight:400;letter-spacing:0px;-webkit-text-stroke:0.2px currentColor;">4</div><div class="t" style="right:904.5px;top:644.03px;font-size:16.5px;line-height:16.5px;color:#7a5514;font-weight:400;letter-spacing:0px;-webkit-text-stroke:0.2px currentColor;">16</div><div class="t" style="right:784px;top:644.03px;font-size:16.5px;line-height:16.5px;color:#7a5514;font-weight:400;letter-spacing:0px;-webkit-text-stroke:0.2px currentColor;">8</div><div class="t" style="right:616px;top:644.03px;font-size:16.5px;line-height:16.5px;color:#2ebd87;font-weight:400;letter-spacing:0px;-webkit-text-stroke:0.2px currentColor;">100%</div><div style="position:absolute;left:733px;top:647px;width:9px;height:9px;border-radius:50%;background:#33c08a;"></div><div class="t" style="left:47px;top:685.03px;font-size:16.5px;line-height:16.5px;color:#7a5514;font-weight:400;letter-spacing:0px;-webkit-text-stroke:0.2px currentColor;">Market Research - Hotel Survey</div><div class="t" style="left:313.5px;top:685.03px;font-size:16.5px;line-height:16.5px;color:#7a5514;font-weight:400;letter-spacing:0.75px;-webkit-text-stroke:0.2px currentColor;">2017-10-30</div><div class="t" style="right:1005.8px;top:685.03px;font-size:16.5px;line-height:16.5px;color:#7a5514;font-weight:400;letter-spacing:0px;-webkit-text-stroke:0.2px currentColor;">2</div><div class="t" style="right:904.5px;top:685.03px;font-size:16.5px;line-height:16.5px;color:#7a5514;font-weight:400;letter-spacing:0px;-webkit-text-stroke:0.2px currentColor;">16</div><div class="t" style="right:784px;top:685.03px;font-size:16.5px;line-height:16.5px;color:#7a5514;font-weight:400;letter-spacing:0px;-webkit-text-stroke:0.2px currentColor;">298</div><div class="t" style="right:616px;top:685.03px;font-size:16.5px;line-height:16.5px;color:#f0a032;font-weight:400;letter-spacing:0px;-webkit-text-stroke:0.2px currentColor;">88.93%</div><div style="position:absolute;left:733px;top:688px;width:9px;height:9px;border-radius:50%;background:#f2a431;"></div><div class="t" style="left:47px;top:726.03px;font-size:16.5px;line-height:16.5px;color:#7a5514;font-weight:400;letter-spacing:0px;-webkit-text-stroke:0.2px currentColor;">Market Research Survey</div><div class="t" style="left:313.5px;top:726.03px;font-size:16.5px;line-height:16.5px;color:#7a5514;font-weight:400;letter-spacing:0.75px;-webkit-text-stroke:0.2px currentColor;">2016-12-20</div><div class="t" style="right:1005.8px;top:726.03px;font-size:16.5px;line-height:16.5px;color:#7a5514;font-weight:400;letter-spacing:0px;-webkit-text-stroke:0.2px currentColor;">1</div><div class="t" style="right:904.5px;top:726.03px;font-size:16.5px;line-height:16.5px;color:#7a5514;font-weight:400;letter-spacing:0px;-webkit-text-stroke:0.2px currentColor;">10</div><div class="t" style="right:784px;top:726.03px;font-size:16.5px;line-height:16.5px;color:#7a5514;font-weight:400;letter-spacing:0px;-webkit-text-stroke:0.2px currentColor;">8</div><div class="t" style="right:616px;top:726.03px;font-size:16.5px;line-height:16.5px;color:#e5364f;font-weight:400;letter-spacing:0px;-webkit-text-stroke:0.2px currentColor;">62.5%</div><div style="position:absolute;left:733px;top:729px;width:9px;height:9px;border-radius:50%;background:#e6374f;"></div><div class="t" style="left:47px;top:767.03px;font-size:16.5px;line-height:16.5px;color:#7a5514;font-weight:400;letter-spacing:0px;-webkit-text-stroke:0.2px currentColor;">NPS Survey</div><div class="t" style="left:313.5px;top:767.03px;font-size:16.5px;line-height:16.5px;color:#7a5514;font-weight:400;letter-spacing:0.75px;-webkit-text-stroke:0.2px currentColor;">2017-01-17</div><div class="t" style="right:1005.8px;top:767.03px;font-size:16.5px;line-height:16.5px;color:#7a5514;font-weight:400;letter-spacing:0px;-webkit-text-stroke:0.2px currentColor;">3</div><div class="t" style="right:904.5px;top:767.03px;font-size:16.5px;line-height:16.5px;color:#7a5514;font-weight:400;letter-spacing:0px;-webkit-text-stroke:0.2px currentColor;">11</div><div class="t" style="right:784px;top:767.03px;font-size:16.5px;line-height:16.5px;color:#7a5514;font-weight:400;letter-spacing:0px;-webkit-text-stroke:0.2px currentColor;">10</div><div class="t" style="right:616px;top:767.03px;font-size:16.5px;line-height:16.5px;color:#2ebd87;font-weight:400;letter-spacing:0px;-webkit-text-stroke:0.2px currentColor;">100%</div><div style="position:absolute;left:733px;top:770px;width:9px;height:9px;border-radius:50%;background:#33c08a;"></div><div class="t" style="left:47px;top:808.03px;font-size:16.5px;line-height:16.5px;color:#7a5514;font-weight:400;letter-spacing:0px;-webkit-text-stroke:0.2px currentColor;">Product Feedback Survey</div><div class="t" style="left:313.5px;top:808.03px;font-size:16.5px;line-height:16.5px;color:#7a5514;font-weight:400;letter-spacing:0.75px;-webkit-text-stroke:0.2px currentColor;">2017-10-05</div><div class="t" style="right:1005.8px;top:808.03px;font-size:16.5px;line-height:16.5px;color:#7a5514;font-weight:400;letter-spacing:0px;-webkit-text-stroke:0.2px currentColor;">2</div><div class="t" style="right:904.5px;top:808.03px;font-size:16.5px;line-height:16.5px;color:#7a5514;font-weight:400;letter-spacing:0px;-webkit-text-stroke:0.2px currentColor;">16</div><div class="t" style="right:784px;top:808.03px;font-size:16.5px;line-height:16.5px;color:#7a5514;font-weight:400;letter-spacing:0px;-webkit-text-stroke:0.2px currentColor;">40</div><div class="t" style="right:616px;top:808.03px;font-size:16.5px;line-height:16.5px;color:#f0a032;font-weight:400;letter-spacing:0px;-webkit-text-stroke:0.2px currentColor;">72.5%</div><div style="position:absolute;left:733px;top:811px;width:9px;height:9px;border-radius:50%;background:#f2a431;"></div><div class="t" style="left:47px;top:849.03px;font-size:16.5px;line-height:16.5px;color:#7a5514;font-weight:400;letter-spacing:0px;-webkit-text-stroke:0.2px currentColor;">Professional Event Feedback</div><div class="t" style="left:313.5px;top:849.03px;font-size:16.5px;line-height:16.5px;color:#7a5514;font-weight:400;letter-spacing:0.75px;-webkit-text-stroke:0.2px currentColor;">2017-01-03</div><div class="t" style="right:1005.8px;top:849.03px;font-size:16.5px;line-height:16.5px;color:#7a5514;font-weight:400;letter-spacing:0px;-webkit-text-stroke:0.2px currentColor;">2</div><div class="t" style="right:904.5px;top:849.03px;font-size:16.5px;line-height:16.5px;color:#7a5514;font-weight:400;letter-spacing:0px;-webkit-text-stroke:0.2px currentColor;">11</div><div class="t" style="right:784px;top:849.03px;font-size:16.5px;line-height:16.5px;color:#7a5514;font-weight:400;letter-spacing:0px;-webkit-text-stroke:0.2px currentColor;">1</div><div class="t" style="right:616px;top:849.03px;font-size:16.5px;line-height:16.5px;color:#e5364f;font-weight:400;letter-spacing:0px;-webkit-text-stroke:0.2px currentColor;">0%</div><div style="position:absolute;left:733px;top:852px;width:9px;height:9px;border-radius:50%;background:#e6374f;"></div><div class="t" style="left:47px;top:890.03px;font-size:16.5px;line-height:16.5px;color:#7a5514;font-weight:400;letter-spacing:0px;-webkit-text-stroke:0.2px currentColor;">Target Market Demographics</div><div class="t" style="left:313.5px;top:890.03px;font-size:16.5px;line-height:16.5px;color:#7a5514;font-weight:400;letter-spacing:0.75px;-webkit-text-stroke:0.2px currentColor;">2017-10-30</div><div class="t" style="right:1005.8px;top:890.03px;font-size:16.5px;line-height:16.5px;color:#7a5514;font-weight:400;letter-spacing:0px;-webkit-text-stroke:0.2px currentColor;">6</div><div class="t" style="right:904.5px;top:890.03px;font-size:16.5px;line-height:16.5px;color:#7a5514;font-weight:400;letter-spacing:0px;-webkit-text-stroke:0.2px currentColor;">15</div><div class="t" style="right:784px;top:890.03px;font-size:16.5px;line-height:16.5px;color:#7a5514;font-weight:400;letter-spacing:0px;-webkit-text-stroke:0.2px currentColor;">110</div><div class="t" style="right:616px;top:890.03px;font-size:16.5px;line-height:16.5px;color:#f0a032;font-weight:400;letter-spacing:0px;-webkit-text-stroke:0.2px currentColor;">77.27%</div><div style="position:absolute;left:733px;top:893px;width:9px;height:9px;border-radius:50%;background:#f2a431;"></div><svg style="position:absolute;left:0;top:0" width="1500" height="995"><path d="M1191,614.3 L1191.00,364.80 A249.5,249.5 0 0 1 1407.07,489.55 Z" fill="#f2707a" stroke="#fff" stroke-width="1"/><path d="M1191,614.3 L1407.07,489.55 A249.5,249.5 0 0 1 1315.75,830.37 Z" fill="#5b5b5b" stroke="#fff" stroke-width="1"/><path d="M1191,614.3 L1315.75,830.37 A249.5,249.5 0 0 1 1066.25,830.37 Z" fill="#ffad7b" stroke="#fff" stroke-width="1"/><path d="M1191,614.3 L1066.25,830.37 A249.5,249.5 0 0 1 1191.00,364.80 Z" fill="#17d3bb" stroke="#fff" stroke-width="1"/></svg><div class="t" style="left:751.0px;width:1000px;text-align:center;top:492.53px;font-size:16.5px;line-height:16.5px;color:#fff;font-weight:400;letter-spacing:0px;-webkit-text-stroke:0.4px #fff;">16.7%</div><div class="t" style="left:808.0px;width:1000px;text-align:center;top:637.68px;font-size:17.5px;line-height:17.5px;color:#fff;font-weight:400;letter-spacing:0px;-webkit-text-stroke:0.5px #fff;">25%</div><div class="t" style="left:692.0px;width:1000px;text-align:center;top:729.53px;font-size:16.5px;line-height:16.5px;color:#fff;font-weight:400;letter-spacing:0px;-webkit-text-stroke:0.4px #fff;">16.7%</div><div class="t" style="left:570.0px;width:1000px;text-align:center;top:574.53px;font-size:16.5px;line-height:16.5px;color:#fff;font-weight:400;letter-spacing:0px;-webkit-text-stroke:0.4px #fff;">41.7%</div><div style="position:absolute;left:947px;top:901px;width:15px;height:15px;background:#f2707a;"><svg width="15" height="15" style="position:absolute;left:0;top:0"><path d="M4.3,8.2 L6.6,11 L10.6,3.6" stroke="#fff" stroke-width="1.2" fill="none"/></svg></div><div class="t" style="left:967.2px;top:901.31px;font-size:17px;line-height:17px;color:#111;font-weight:400;letter-spacing:0.45px;">Customer Feedback</div><div style="position:absolute;left:1146px;top:901px;width:15px;height:15px;background:#5b5b5b;"><svg width="15" height="15" style="position:absolute;left:0;top:0"><path d="M4.3,8.2 L6.6,11 L10.6,3.6" stroke="#fff" stroke-width="1.2" fill="none"/></svg></div><div class="t" style="left:1166px;top:901.31px;font-size:17px;line-height:17px;color:#111;font-weight:400;letter-spacing:0.15px;">Human Resources</div><div style="position:absolute;left:1330px;top:901px;width:15px;height:15px;background:#ffad7b;"><svg width="15" height="15" style="position:absolute;left:0;top:0"><path d="M4.3,8.2 L6.6,11 L10.6,3.6" stroke="#fff" stroke-width="1.2" fill="none"/></svg></div><div class="t" style="left:1350px;top:901.31px;font-size:17px;line-height:17px;color:#111;font-weight:400;letter-spacing:0.5px;">Marketing</div><div style="position:absolute;left:1157px;top:934px;width:15px;height:15px;background:#17d3bb;"><svg width="15" height="15" style="position:absolute;left:0;top:0"><path d="M4.3,8.2 L6.6,11 L10.6,3.6" stroke="#fff" stroke-width="1.2" fill="none"/></svg></div><div class="t" style="left:1178px;top:934.31px;font-size:17px;line-height:17px;color:#111;font-weight:400;letter-spacing:0.5px;">Other</div>
</body></html>
